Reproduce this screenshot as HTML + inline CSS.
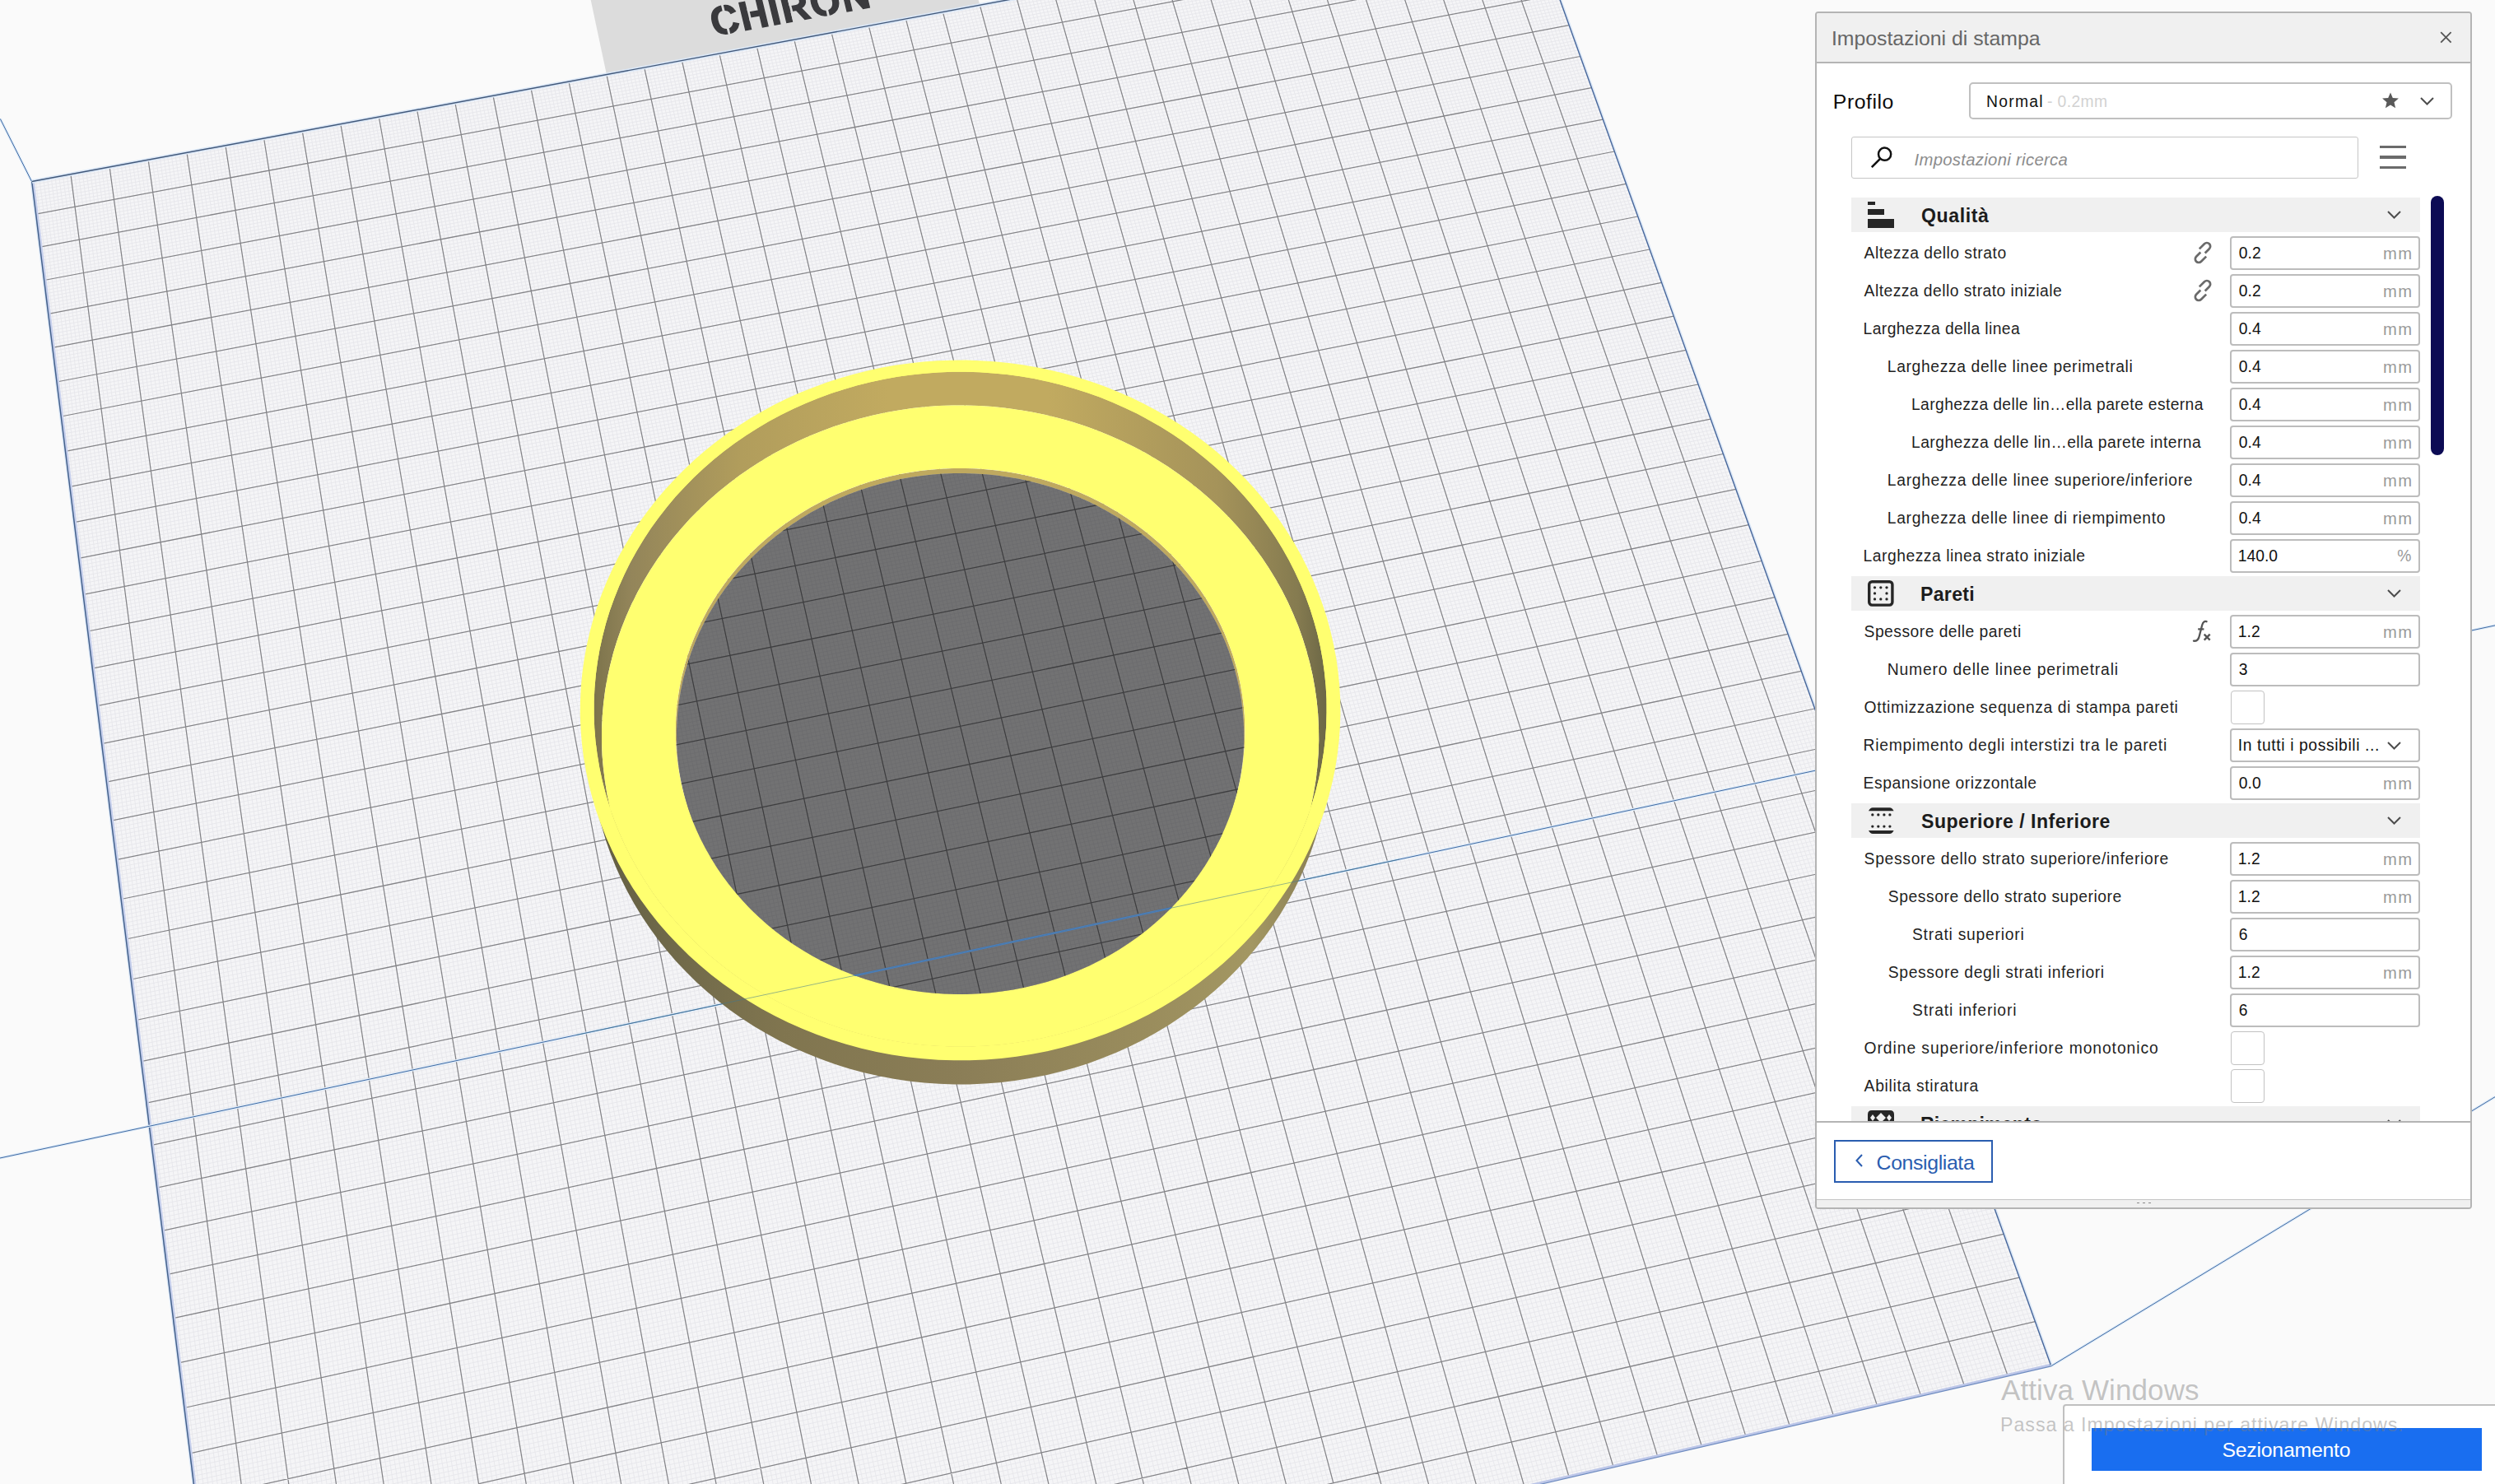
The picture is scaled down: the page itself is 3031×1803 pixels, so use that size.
<!DOCTYPE html>
<html lang="it"><head><meta charset="utf-8"><title>Cura</title>
<style>
html,body{margin:0;padding:0}
body{width:3031px;height:1803px;overflow:hidden;background:#fafafa;position:relative;font-family:"Liberation Sans",sans-serif}
.t{position:absolute;white-space:nowrap;line-height:30px;font-family:"Liberation Sans",sans-serif}
</style></head><body>
<svg width="3031" height="1803" viewBox="0 0 3031 1803" style="position:absolute;left:0;top:0">
<defs>
<clipPath id="cE2"><path d="M1596.1 754.5L1600.4 769.9L1603.9 785.6L1606.8 801.3L1609 817.2L1610.6 833.2L1611.5 849.2L1611.6 865.3L1611.2 881.5L1610 897.6L1608.1 913.7L1605.5 929.7L1602.2 945.7L1598.3 961.6L1593.6 977.3L1588.3 992.9L1582.3 1008.3L1575.6 1023.5L1568.2 1038.4L1560.2 1053.1L1551.5 1067.5L1542.2 1081.6L1532.3 1095.4L1521.7 1108.8L1510.6 1121.8L1498.9 1134.4L1486.6 1146.6L1473.8 1158.3L1460.5 1169.6L1446.6 1180.3L1432.3 1190.5L1417.5 1200.2L1402.3 1209.4L1386.7 1218L1370.7 1226L1354.3 1233.3L1337.6 1240.1L1320.6 1246.2L1303.4 1251.7L1285.9 1256.6L1268.2 1260.7L1250.3 1264.2L1232.2 1267L1214.1 1269.2L1195.9 1270.6L1177.6 1271.4L1159.3 1271.4L1141 1270.8L1122.7 1269.5L1104.6 1267.5L1086.5 1264.8L1068.6 1261.4L1050.8 1257.4L1033.3 1252.7L1016 1247.3L999 1241.3L982.2 1234.6L965.8 1227.3L949.7 1219.5L934 1211L918.7 1202L903.8 1192.4L889.4 1182.2L875.5 1171.6L862 1160.4L849.1 1148.8L836.7 1136.7L824.9 1124.1L813.6 1111.2L803 1097.9L792.9 1084.2L783.5 1070.1L774.7 1055.8L766.5 1041.1L759 1026.2L752.2 1011.1L746.1 995.7L740.6 980.2L735.8 964.5L731.7 948.6L728.3 932.7L725.6 916.6L723.5 900.6L722.2 884.4L721.6 868.3L721.6 852.2L722.4 836.1L723.8 820.1L725.9 804.2L728.6 788.4L732.1 772.8L736.1 757.3L740.8 742L746.2 726.9L752.2 712L758.7 697.4L765.9 683.1L773.7 669L782 655.2L790.8 641.8L800.3 628.7L810.2 616L820.6 603.6L831.6 591.7L843 580.1L854.8 569L867.1 558.3L879.8 548.1L892.9 538.3L906.4 529L920.2 520.2L934.4 511.8L948.9 504L963.7 496.7L978.8 490L994.1 483.7L1009.6 478L1025.4 472.9L1041.4 468.2L1057.5 464.2L1073.8 460.7L1090.2 457.8L1106.7 455.4L1123.2 453.7L1139.9 452.5L1156.6 451.8L1173.2 451.8L1189.9 452.3L1206.6 453.4L1223.2 455.1L1239.7 457.3L1256.1 460.1L1272.4 463.5L1288.6 467.5L1304.5 472L1320.4 477L1336 482.6L1351.3 488.8L1366.4 495.4L1381.3 502.6L1395.9 510.4L1410.1 518.6L1424 527.3L1437.6 536.5L1450.7 546.2L1463.5 556.4L1475.9 567L1487.8 578L1499.3 589.5L1510.4 601.4L1520.9 613.7L1530.9 626.3L1540.5 639.4L1549.5 652.7L1557.9 666.4L1565.8 680.4L1573 694.7L1579.7 709.3L1585.8 724.1L1591.3 739.2Z"/></clipPath>
<clipPath id="cE4"><path d="M1501.2 808L1504.4 820.1L1507 832.3L1509.1 844.6L1510.7 857.1L1511.8 869.5L1512.3 882.1L1512.3 894.6L1511.8 907.2L1510.7 919.7L1509.1 932.3L1507 944.7L1504.3 957.1L1501.1 969.4L1497.4 981.6L1493.1 993.7L1488.3 1005.6L1483 1017.4L1477.2 1028.9L1470.9 1040.3L1464.1 1051.4L1456.8 1062.3L1449 1072.9L1440.8 1083.2L1432.1 1093.2L1423 1102.9L1413.5 1112.3L1403.5 1121.3L1393.1 1129.9L1382.4 1138.2L1371.3 1146L1359.9 1153.5L1348.1 1160.5L1336 1167.1L1323.7 1173.2L1311.1 1178.8L1298.2 1184L1285.1 1188.7L1271.8 1192.9L1258.3 1196.6L1244.7 1199.8L1230.9 1202.4L1217.1 1204.6L1203.1 1206.2L1189.1 1207.3L1175 1207.9L1161 1208L1146.9 1207.5L1132.9 1206.5L1118.9 1204.9L1105 1202.9L1091.2 1200.3L1077.5 1197.2L1064 1193.6L1050.7 1189.5L1037.6 1184.9L1024.6 1179.8L1012 1174.2L999.6 1168.2L987.4 1161.7L975.6 1154.8L964.1 1147.4L952.9 1139.7L942.1 1131.5L931.7 1122.9L921.7 1114L912 1104.7L902.8 1095L894.1 1085.1L885.7 1074.8L877.9 1064.2L870.5 1053.4L863.6 1042.3L857.2 1031L851.2 1019.5L845.8 1007.8L840.9 995.9L836.6 983.9L832.7 971.7L829.4 959.4L826.6 947L824.4 934.5L822.7 922L821.5 909.5L820.9 896.9L820.8 884.4L821.2 871.8L822.2 859.3L823.7 846.9L825.7 834.6L828.2 822.3L831.3 810.2L834.8 798.2L838.8 786.3L843.4 774.6L848.4 763.2L853.9 751.9L859.8 740.8L866.2 730L873 719.4L880.3 709.1L888 699L896 689.3L904.5 679.8L913.3 670.7L922.5 661.9L932.1 653.4L942 645.3L952.2 637.6L962.7 630.2L973.5 623.2L984.6 616.6L995.9 610.4L1007.5 604.6L1019.3 599.2L1031.3 594.3L1043.4 589.7L1055.8 585.6L1068.3 582L1081 578.8L1093.7 576L1106.6 573.7L1119.5 571.8L1132.5 570.4L1145.6 569.4L1158.7 568.9L1171.8 568.9L1184.9 569.3L1198 570.2L1211 571.5L1223.9 573.3L1236.8 575.5L1249.6 578.2L1262.3 581.4L1274.8 584.9L1287.2 589L1299.4 593.4L1311.5 598.3L1323.3 603.6L1334.9 609.3L1346.3 615.4L1357.4 622L1368.3 628.9L1378.8 636.2L1389.1 643.9L1399.1 651.9L1408.7 660.3L1418 669.1L1426.9 678.1L1435.4 687.5L1443.6 697.2L1451.4 707.2L1458.7 717.5L1465.6 728L1472.1 738.8L1478.1 749.8L1483.7 761.1L1488.8 772.5L1493.4 784.2L1497.6 796Z"/></clipPath>
<linearGradient id="gIn" gradientUnits="userSpaceOnUse" x1="722" y1="0" x2="1612" y2="0"><stop offset="0" stop-color="#7d744c"/><stop offset="0.05" stop-color="#93855a"/><stop offset="0.2" stop-color="#b19d5c"/><stop offset="0.4" stop-color="#c1aa60"/><stop offset="0.62" stop-color="#c1aa60"/><stop offset="0.85" stop-color="#a5935a"/><stop offset="0.96" stop-color="#857b50"/><stop offset="1" stop-color="#6c6746"/></linearGradient>
<linearGradient id="gOut" gradientUnits="userSpaceOnUse" x1="705" y1="0" x2="1628" y2="0"><stop offset="0.000" stop-color="#5f5a40"/><stop offset="0.103" stop-color="#6e6849"/><stop offset="0.265" stop-color="#80754f"/><stop offset="0.504" stop-color="#8b7e57"/><stop offset="0.753" stop-color="#9a8d5d"/><stop offset="0.883" stop-color="#a39762"/><stop offset="0.959" stop-color="#8d8257"/><stop offset="1.000" stop-color="#6b6544"/></linearGradient>
</defs>
<path d="M736.9 90.6L716.1 -7.5L1186.3 -8.7L1190.3 6.2Z" fill="#dcdcdc"/>
<g transform="matrix(0.4627 -0.0856 0.1160 0.4796 867.6 43.7)"><text font-family="Liberation Sans, sans-serif" font-weight="bold" font-size="100" letter-spacing="4" fill="#3a3a3d" stroke="#3a3a3d" stroke-width="3" x="0" y="0">CHIRON</text>
<rect x="36" y="-85" width="6" height="100" fill="#dcdcdc"/><rect x="98.5" y="-50" width="5.5" height="30" fill="#dcdcdc"/><rect x="207" y="-80" width="5.5" height="90" fill="#dcdcdc"/><rect x="296.5" y="-85" width="6" height="100" fill="#dcdcdc"/><rect x="365.5" y="-80" width="5" height="22" fill="#dcdcdc"/></g>
<path d="M38.7 220.5L1853 -117.1L2491.8 1659.8L281.2 2171.3Z" fill="#f5f5f7"/>
<path d="M43.4 219.6L241.6 1807M39.2 224.4L1266.2 -4M48.1 218.7L247.4 1807M39.6 228.4L1287.3 -4M52.9 217.8L253.2 1807M40.1 232.3L1308.4 -4M57.6 217L259 1807M40.6 236.3L1329.5 -4M62.3 216.1L264.7 1807M41.1 240.2L1350.6 -4M67 215.2L270.5 1807M41.6 244.2L1371.7 -4M71.7 214.3L276.3 1807M42.1 248.2L1392.7 -4M76.5 213.4L282.1 1807M42.6 252.1L1413.8 -4M81.2 212.6L287.8 1807M43.1 256.1L1434.9 -4M90.6 210.8L299.4 1807M44.1 264.1L1477.1 -4M95.3 209.9L305.1 1807M44.6 268.1L1498.2 -4M100.1 209.1L310.9 1807M45.1 272L1519.3 -4M104.8 208.2L316.7 1807M45.6 276L1540.4 -4M109.5 207.3L322.5 1807M46.1 280L1561.5 -4M114.2 206.4L328.2 1807M46.6 284L1582.5 -4M118.9 205.5L334 1807M47.1 288L1603.6 -4M123.6 204.7L339.8 1807M47.6 292.1L1624.7 -4M128.3 203.8L345.5 1807M48.1 296.1L1645.8 -4M137.8 202L357.1 1807M49.1 304.1L1688 -4M142.5 201.2L362.9 1807M49.6 308.1L1709.1 -4M147.2 200.3L368.6 1807M50.1 312.2L1730.2 -4M151.9 199.4L374.4 1807M50.6 316.2L1751.3 -4M156.6 198.5L380.2 1807M51.1 320.2L1772.3 -4M161.3 197.7L385.9 1807M51.6 324.3L1793.4 -4M166 196.8L391.7 1807M52.1 328.3L1814.5 -4M170.7 195.9L397.5 1807M52.6 332.4L1835.6 -4M175.4 195L403.3 1807M53.1 336.4L1856.7 -4M184.8 193.3L414.8 1807M54.1 344.5L1894 -3.1M189.5 192.4L420.6 1807M54.6 348.6L1895.3 0.7M194.2 191.5L426.3 1807M55.1 352.7L1896.7 4.4M198.9 190.7L432.1 1807M55.6 356.7L1898 8.1M203.6 189.8L437.9 1807M56.1 360.8L1899.4 11.9M208.3 188.9L443.7 1807M56.6 364.9L1900.7 15.6M213 188L449.4 1807M57.1 369L1902.1 19.4M217.7 187.2L455.2 1807M57.6 373.1L1903.4 23.1M222.4 186.3L461 1807M58.1 377.2L1904.8 26.9M231.7 184.6L472.5 1807M59.2 385.4L1907.5 34.4M236.4 183.7L478.3 1807M59.7 389.5L1908.8 38.2M241.1 182.8L484.1 1807M60.2 393.6L1910.2 42M245.8 181.9L489.8 1807M60.7 397.7L1911.5 45.7M250.5 181.1L495.6 1807M61.2 401.8L1912.9 49.5M255.2 180.2L501.4 1807M61.7 405.9L1914.3 53.3M259.8 179.3L507.2 1807M62.2 410L1915.6 57.1M264.5 178.5L512.9 1807M62.7 414.2L1917 60.9M269.2 177.6L518.7 1807M63.3 418.3L1918.3 64.7M278.6 175.8L530.2 1807M64.3 426.6L1921.1 72.3M283.2 175L536 1807M64.8 430.7L1922.4 76.1M287.9 174.1L541.8 1807M65.3 434.9L1923.8 79.9M292.6 173.2L547.6 1807M65.8 439L1925.2 83.7M297.3 172.4L553.3 1807M66.3 443.2L1926.6 87.5M301.9 171.5L559.1 1807M66.9 447.3L1927.9 91.3M306.6 170.6L564.9 1807M67.4 451.5L1929.3 95.1M311.3 169.8L570.6 1807M67.9 455.7L1930.7 99M316 168.9L576.4 1807M68.4 459.8L1932 102.8M325.3 167.1L588 1807M69.5 468.2L1934.8 110.5M330 166.3L593.7 1807M70 472.4L1936.2 114.3M334.6 165.4L599.5 1807M70.5 476.6L1937.6 118.1M339.3 164.5L605.3 1807M71 480.8L1939 122M344 163.7L611 1807M71.5 485L1940.3 125.8M348.6 162.8L616.8 1807M72.1 489.2L1941.7 129.7M353.3 161.9L622.6 1807M72.6 493.4L1943.1 133.5M358 161.1L628.4 1807M73.1 497.6L1944.5 137.4M362.6 160.2L634.1 1807M73.6 501.8L1945.9 141.3M371.9 158.5L645.7 1807M74.7 510.2L1948.7 149M376.6 157.6L651.5 1807M75.2 514.5L1950.1 152.9M381.2 156.7L657.2 1807M75.7 518.7L1951.5 156.8M385.9 155.9L663 1807M76.3 522.9L1952.9 160.7M390.6 155L668.8 1807M76.8 527.2L1954.3 164.5M395.2 154.1L674.5 1807M77.3 531.4L1955.7 168.4M399.9 153.3L680.3 1807M77.8 535.7L1957.1 172.3M404.5 152.4L686.1 1807M78.4 539.9L1958.5 176.2M409.2 151.5L691.9 1807M78.9 544.2L1959.9 180.1M418.5 149.8L703.4 1807M80 552.7L1962.7 187.9M423.1 148.9L709.2 1807M80.5 557L1964.1 191.9M427.8 148.1L714.9 1807M81 561.2L1965.5 195.8M432.4 147.2L720.7 1807M81.6 565.5L1966.9 199.7M437.1 146.3L726.5 1807M82.1 569.8L1968.3 203.6M441.7 145.5L732.3 1807M82.6 574.1L1969.7 207.6M446.3 144.6L738 1807M83.2 578.4L1971.1 211.5M451 143.8L743.8 1807M83.7 582.7L1972.5 215.4M455.6 142.9L749.6 1807M84.2 587L1974 219.4M464.9 141.2L761.1 1807M85.3 595.6L1976.8 227.3M469.5 140.3L766.9 1807M85.8 599.9L1978.2 231.2M474.2 139.4L772.7 1807M86.4 604.2L1979.6 235.2M478.8 138.6L778.4 1807M86.9 608.5L1981.1 239.1M483.5 137.7L784.2 1807M87.4 612.9L1982.5 243.1M488.1 136.9L790 1807M88 617.2L1983.9 247M492.7 136L795.7 1807M88.5 621.5L1985.3 251M497.4 135.1L801.5 1807M89.1 625.9L1986.8 255M502 134.3L807.3 1807M89.6 630.2L1988.2 259M511.3 132.5L818.8 1807M90.7 638.9L1991.1 266.9M515.9 131.7L824.6 1807M91.2 643.3L1992.5 270.9M520.5 130.8L830.4 1807M91.8 647.6L1993.9 274.9M525.1 130L836.2 1807M92.3 652L1995.4 278.9M529.8 129.1L841.9 1807M92.8 656.4L1996.8 282.9M534.4 128.2L847.7 1807M93.4 660.7L1998.2 286.9M539 127.4L853.5 1807M93.9 665.1L1999.7 290.9M543.6 126.5L859.2 1807M94.5 669.5L2001.1 294.9M548.3 125.7L865 1807M95 673.9L2002.6 299M557.5 123.9L876.6 1807M96.1 682.7L2005.5 307M562.1 123.1L882.3 1807M96.7 687.1L2006.9 311M566.7 122.2L888.1 1807M97.2 691.5L2008.4 315.1M571.3 121.4L893.9 1807M97.8 695.9L2009.8 319.1M576 120.5L899.6 1807M98.3 700.3L2011.3 323.1M580.6 119.6L905.4 1807M98.9 704.7L2012.7 327.2M585.2 118.8L911.2 1807M99.4 709.1L2014.2 331.2M589.8 117.9L917 1807M100 713.6L2015.6 335.3M594.4 117.1L922.7 1807M100.5 718L2017.1 339.3M603.6 115.4L934.3 1807M101.6 726.9L2020 347.5M608.2 114.5L940 1807M102.2 731.3L2021.5 351.5M612.9 113.6L945.8 1807M102.7 735.8L2022.9 355.6M617.5 112.8L951.6 1807M103.3 740.2L2024.4 359.7M622.1 111.9L957.4 1807M103.8 744.7L2025.9 363.8M626.7 111.1L963.1 1807M104.4 749.1L2027.3 367.8M631.3 110.2L968.9 1807M104.9 753.6L2028.8 371.9M635.9 109.4L974.7 1807M105.5 758.1L2030.3 376M640.5 108.5L980.5 1807M106 762.6L2031.8 380.1M649.7 106.8L992 1807M107.2 771.5L2034.7 388.3M654.3 105.9L997.8 1807M107.7 776L2036.2 392.4M658.9 105.1L1003.5 1807M108.3 780.5L2037.7 396.5M663.5 104.2L1009.3 1807M108.8 785L2039.1 400.6M668.1 103.4L1015.1 1807M109.4 789.5L2040.6 404.8M672.7 102.5L1020.9 1807M110 794L2042.1 408.9M677.3 101.7L1026.6 1807M110.5 798.5L2043.6 413M681.9 100.8L1032.4 1807M111.1 803L2045.1 417.1M686.5 99.9L1038.2 1807M111.6 807.6L2046.6 421.3M695.6 98.2L1049.7 1807M112.8 816.6L2049.5 429.6M700.2 97.4L1055.5 1807M113.3 821.2L2051 433.7M704.8 96.5L1061.3 1807M113.9 825.7L2052.5 437.9M709.4 95.7L1067 1807M114.5 830.3L2054 442M714 94.8L1072.8 1807M115 834.8L2055.5 446.2M718.6 94L1078.6 1807M115.6 839.4L2057 450.3M723.2 93.1L1084.4 1807M116.2 843.9L2058.5 454.5M727.7 92.3L1090.1 1807M116.7 848.5L2060 458.7M732.3 91.4L1095.9 1807M117.3 853.1L2061.5 462.9M741.5 89.7L1107.4 1807M118.4 862.2L2064.5 471.2M746.1 88.9L1113.2 1807M119 866.8L2066 475.4M750.7 88L1119 1807M119.6 871.4L2067.5 479.6M755.2 87.2L1124.8 1807M120.1 876L2069 483.8M759.8 86.3L1130.5 1807M120.7 880.6L2070.5 488M764.4 85.4L1136.3 1807M121.3 885.2L2072.1 492.2M769 84.6L1142.1 1807M121.9 889.8L2073.6 496.4M773.5 83.7L1147.8 1807M122.4 894.4L2075.1 500.6M778.1 82.9L1153.6 1807M123 899L2076.6 504.9M787.2 81.2L1165.2 1807M124.2 908.3L2079.6 513.3M791.8 80.3L1170.9 1807M124.7 912.9L2081.2 517.5M796.4 79.5L1176.7 1807M125.3 917.5L2082.7 521.8M801 78.6L1182.5 1807M125.9 922.2L2084.2 526M805.5 77.8L1188.2 1807M126.5 926.8L2085.7 530.2M810.1 76.9L1194 1807M127 931.5L2087.3 534.5M814.7 76.1L1199.8 1807M127.6 936.1L2088.8 538.7M819.2 75.2L1205.6 1807M128.2 940.8L2090.3 543M823.8 74.4L1211.3 1807M128.8 945.4L2091.8 547.3M832.9 72.7L1222.9 1807M129.9 954.8L2094.9 555.8M837.5 71.8L1228.7 1807M130.5 959.5L2096.5 560.1M842 71L1234.4 1807M131.1 964.2L2098 564.3M846.6 70.2L1240.2 1807M131.7 968.8L2099.5 568.6M851.2 69.3L1246 1807M132.3 973.5L2101.1 572.9M855.7 68.5L1251.7 1807M132.9 978.2L2102.6 577.2M860.3 67.6L1257.5 1807M133.4 982.9L2104.2 581.5M864.8 66.8L1263.3 1807M134 987.7L2105.7 585.8M869.4 65.9L1269.1 1807M134.6 992.4L2107.2 590.1M878.5 64.2L1280.6 1807M135.8 1001.8L2110.3 598.7M883 63.4L1286.4 1807M136.4 1006.5L2111.9 603M887.6 62.5L1292.1 1807M137 1011.3L2113.5 607.4M892.1 61.7L1297.9 1807M137.6 1016L2115 611.7M896.7 60.8L1303.7 1807M138.1 1020.8L2116.6 616M901.2 60L1309.5 1807M138.7 1025.5L2118.1 620.3M905.8 59.1L1315.2 1807M139.3 1030.3L2119.7 624.7M910.3 58.3L1321 1807M139.9 1035L2121.2 629M914.9 57.4L1326.8 1807M140.5 1039.8L2122.8 633.4M923.9 55.8L1338.3 1807M141.7 1049.3L2125.9 642.1M928.5 54.9L1344.1 1807M142.3 1054.1L2127.5 646.4M933 54.1L1349.9 1807M142.9 1058.9L2129.1 650.8M937.6 53.2L1355.6 1807M143.5 1063.7L2130.6 655.2M942.1 52.4L1361.4 1807M144.1 1068.5L2132.2 659.5M946.7 51.5L1367.2 1807M144.7 1073.3L2133.8 663.9M951.2 50.7L1373 1807M145.3 1078.1L2135.4 668.3M955.7 49.8L1378.7 1807M145.9 1082.9L2136.9 672.7M960.3 49L1384.5 1807M146.5 1087.7L2138.5 677.1M969.3 47.3L1396 1807M147.7 1097.3L2141.7 685.9M973.9 46.5L1401.8 1807M148.3 1102.2L2143.3 690.3M978.4 45.6L1407.6 1807M148.9 1107L2144.8 694.7M982.9 44.8L1413.4 1807M149.5 1111.9L2146.4 699.1M987.5 43.9L1419.1 1807M150.1 1116.7L2148 703.5M992 43.1L1424.9 1807M150.7 1121.5L2149.6 707.9M996.5 42.3L1430.7 1807M151.3 1126.4L2151.2 712.3M1001 41.4L1436.5 1807M151.9 1131.3L2152.8 716.8M1005.6 40.6L1442.2 1807M152.5 1136.1L2154.4 721.2M1014.6 38.9L1453.8 1807M153.7 1145.9L2157.6 730.1M1019.1 38L1459.5 1807M154.3 1150.8L2159.2 734.5M1023.7 37.2L1465.3 1807M154.9 1155.6L2160.8 739M1028.2 36.4L1471.1 1807M155.5 1160.5L2162.4 743.5M1032.7 35.5L1476.9 1807M156.1 1165.4L2164 747.9M1037.2 34.7L1482.6 1807M156.7 1170.3L2165.6 752.4M1041.7 33.8L1488.4 1807M157.3 1175.2L2167.2 756.9M1046.2 33L1494.2 1807M158 1180.2L2168.8 761.3M1050.8 32.2L1499.9 1807M158.6 1185.1L2170.4 765.8M1059.8 30.5L1511.5 1807M159.8 1194.9L2173.6 774.8M1064.3 29.6L1517.3 1807M160.4 1199.9L2175.3 779.3M1068.8 28.8L1523 1807M161 1204.8L2176.9 783.8M1073.3 28L1528.8 1807M161.6 1209.7L2178.5 788.3M1077.8 27.1L1534.6 1807M162.3 1214.7L2180.1 792.8M1082.4 26.3L1540.4 1807M162.9 1219.7L2181.7 797.3M1086.9 25.4L1546.1 1807M163.5 1224.6L2183.4 801.8M1091.4 24.6L1551.9 1807M164.1 1229.6L2185 806.3M1095.9 23.8L1557.7 1807M164.7 1234.6L2186.6 810.9M1104.9 22.1L1569.2 1807M166 1244.5L2189.9 819.9M1109.4 21.3L1575 1807M166.6 1249.5L2191.5 824.5M1113.9 20.4L1580.8 1807M167.2 1254.5L2193.1 829M1118.4 19.6L1586.5 1807M167.8 1259.5L2194.8 833.6M1122.9 18.7L1592.3 1807M168.4 1264.5L2196.4 838.1M1127.4 17.9L1598.1 1807M169.1 1269.5L2198.1 842.7M1131.9 17.1L1603.8 1807M169.7 1274.5L2199.7 847.2M1136.4 16.2L1609.6 1807M170.3 1279.5L2201.3 851.8M1140.9 15.4L1615.4 1807M170.9 1284.6L2203 856.4M1149.9 13.7L1626.9 1807M172.2 1294.6L2206.3 865.5M1154.4 12.9L1632.7 1807M172.8 1299.7L2207.9 870.1M1158.9 12L1638.5 1807M173.4 1304.7L2209.6 874.7M1163.4 11.2L1644.3 1807M174.1 1309.8L2211.2 879.3M1167.9 10.4L1650 1807M174.7 1314.8L2212.9 883.9M1172.4 9.5L1655.8 1807M175.3 1319.9L2214.5 888.5M1176.8 8.7L1661.6 1807M176 1325L2216.2 893.1M1181.3 7.9L1667.3 1807M176.6 1330L2217.9 897.8M1185.8 7L1673.1 1807M177.2 1335.1L2219.5 902.4M1194.8 5.4L1684.7 1807M178.5 1345.3L2222.9 911.6M1199.3 4.5L1690.4 1807M179.1 1350.4L2224.5 916.3M1203.8 3.7L1696.2 1807M179.8 1355.5L2226.2 920.9M1208.2 2.9L1702 1807M180.4 1360.6L2227.9 925.6M1212.7 2L1707.7 1807M181 1365.7L2229.5 930.2M1217.2 1.2L1713.5 1807M181.7 1370.8L2231.2 934.9M1221.7 0.4L1719.3 1807M182.3 1376L2232.9 939.5M1226.2 -0.5L1725.1 1807M182.9 1381.1L2234.6 944.2M1230.6 -1.3L1730.8 1807M183.6 1386.2L2236.2 948.9M1239.6 -3L1742.4 1807M184.9 1396.5L2239.6 958.2M1244.1 -3.8L1748.2 1807M185.5 1401.7L2241.3 962.9M1248.7 -4L1753.9 1807M186.1 1406.8L2243 967.6M1253.4 -4L1759.7 1807M186.8 1412L2244.7 972.3M1258.1 -4L1765.5 1807M187.4 1417.2L2246.3 977M1262.9 -4L1771.2 1807M188.1 1422.3L2248 981.7M1267.6 -4L1777 1807M188.7 1427.5L2249.7 986.4M1272.3 -4L1782.8 1807M189.3 1432.7L2251.4 991.1M1277 -4L1788.6 1807M190 1437.9L2253.1 995.8M1286.4 -4L1800.1 1807M191.3 1448.3L2256.5 1005.3M1291.1 -4L1805.9 1807M191.9 1453.5L2258.2 1010M1295.8 -4L1811.7 1807M192.6 1458.7L2259.9 1014.7M1300.5 -4L1817.4 1807M193.2 1463.9L2261.6 1019.5M1305.2 -4L1823.2 1807M193.9 1469.2L2263.3 1024.2M1309.9 -4L1829 1807M194.5 1474.4L2265 1029M1314.6 -4L1834.7 1807M195.2 1479.6L2266.8 1033.7M1319.3 -4L1840.5 1807M195.8 1484.9L2268.5 1038.5M1324.1 -4L1846.3 1807M196.5 1490.1L2270.2 1043.3M1333.5 -4L1857.7 1806.5M197.8 1500.6L2273.6 1052.8M1338.2 -4L1863.1 1805.3M198.5 1505.9L2275.3 1057.6M1342.9 -4L1868.5 1804M199.1 1511.2L2277.1 1062.4M1347.6 -4L1873.9 1802.8M199.8 1516.5L2278.8 1067.2M1352.3 -4L1879.3 1801.5M200.4 1521.7L2280.5 1072M1357 -4L1884.7 1800.3M201.1 1527L2282.2 1076.8M1361.7 -4L1890.1 1799M201.7 1532.3L2284 1081.6M1366.4 -4L1895.5 1797.8M202.4 1537.6L2285.7 1086.4M1371.1 -4L1900.9 1796.5M203.1 1542.9L2287.4 1091.2M1380.5 -4L1911.7 1794M204.4 1553.6L2290.9 1100.9M1385.2 -4L1917.1 1792.8M205 1558.9L2292.6 1105.7M1390 -4L1922.5 1791.6M205.7 1564.2L2294.4 1110.6M1394.7 -4L1927.9 1790.3M206.4 1569.6L2296.1 1115.4M1399.4 -4L1933.3 1789.1M207 1574.9L2297.9 1120.3M1404.1 -4L1938.7 1787.8M207.7 1580.3L2299.6 1125.1M1408.8 -4L1944.1 1786.6M208.4 1585.6L2301.3 1130M1413.5 -4L1949.5 1785.3M209 1591L2303.1 1134.8M1418.2 -4L1954.9 1784.1M209.7 1596.4L2304.8 1139.7M1427.6 -4L1965.6 1781.6M211 1607.1L2308.4 1149.5M1432.3 -4L1971 1780.3M211.7 1612.5L2310.1 1154.3M1437 -4L1976.4 1779.1M212.4 1617.9L2311.9 1159.2M1441.7 -4L1981.8 1777.8M213 1623.3L2313.6 1164.1M1446.4 -4L1987.1 1776.6M213.7 1628.7L2315.4 1169M1451.2 -4L1992.5 1775.4M214.4 1634.1L2317.2 1173.9M1455.9 -4L1997.9 1774.1M215.1 1639.5L2318.9 1178.9M1460.6 -4L2003.3 1772.9M215.7 1644.9L2320.7 1183.8M1465.3 -4L2008.6 1771.6M216.4 1650.4L2322.5 1188.7M1474.7 -4L2019.4 1769.1M217.8 1661.2L2326 1198.6M1479.4 -4L2024.7 1767.9M218.4 1666.7L2327.8 1203.5M1484.1 -4L2030.1 1766.7M219.1 1672.1L2329.6 1208.4M1488.8 -4L2035.5 1765.4M219.8 1677.6L2331.3 1213.4M1493.5 -4L2040.8 1764.2M220.5 1683.1L2333.1 1218.3M1498.2 -4L2046.2 1762.9M221.2 1688.5L2334.9 1223.3M1502.9 -4L2051.6 1761.7M221.8 1694L2336.7 1228.3M1507.6 -4L2056.9 1760.5M222.5 1699.5L2338.5 1233.2M1512.3 -4L2062.3 1759.2M223.2 1705L2340.3 1238.2M1521.8 -4L2073 1756.7M224.6 1716L2343.8 1248.2M1526.5 -4L2078.3 1755.5M225.2 1721.5L2345.6 1253.2M1531.2 -4L2083.7 1754.3M225.9 1727L2347.4 1258.2M1535.9 -4L2089 1753M226.6 1732.5L2349.2 1263.2M1540.6 -4L2094.4 1751.8M227.3 1738.1L2351 1268.2M1545.3 -4L2099.7 1750.5M228 1743.6L2352.8 1273.2M1550 -4L2105.1 1749.3M228.7 1749.1L2354.6 1278.2M1554.7 -4L2110.4 1748.1M229.4 1754.7L2356.4 1283.2M1559.4 -4L2115.8 1746.8M230.1 1760.2L2358.3 1288.3M1568.8 -4L2126.5 1744.4M231.4 1771.4L2361.9 1298.3M1573.5 -4L2131.8 1743.1M232.1 1776.9L2363.7 1303.4M1578.3 -4L2137.2 1741.9M232.8 1782.5L2365.5 1308.4M1583 -4L2142.5 1740.7M233.5 1788.1L2367.3 1313.5M1587.7 -4L2147.8 1739.4M234.2 1793.7L2369.1 1318.6M1592.4 -4L2153.2 1738.2M234.9 1799.3L2371 1323.6M1597.1 -4L2158.5 1737M235.6 1804.9L2372.8 1328.7M1601.8 -4L2163.8 1735.7M252 1807L2374.6 1333.8M1606.5 -4L2169.2 1734.5M277.9 1807L2376.4 1338.9M1615.9 -4L2179.8 1732M329.6 1807L2380.1 1349M1620.6 -4L2185.1 1730.8M355.5 1807L2381.9 1354.1M1625.3 -4L2190.5 1729.6M381.3 1807L2383.8 1359.2M1630 -4L2195.8 1728.3M407.2 1807L2385.6 1364.4M1634.7 -4L2201.1 1727.1M433.1 1807L2387.5 1369.5M1639.4 -4L2206.4 1725.9M458.9 1807L2389.3 1374.6M1644.2 -4L2211.8 1724.6M484.8 1807L2391.1 1379.7M1648.9 -4L2217.1 1723.4M510.6 1807L2393 1384.9M1653.6 -4L2222.4 1722.2M536.5 1807L2394.8 1390M1663 -4L2233 1719.7M588.2 1807L2398.5 1400.3M1667.7 -4L2238.3 1718.5M614.1 1807L2400.4 1405.5M1672.4 -4L2243.7 1717.3M640 1807L2402.2 1410.6M1677.1 -4L2249 1716M665.8 1807L2404.1 1415.8M1681.8 -4L2254.3 1714.8M691.7 1807L2406 1421M1686.5 -4L2259.6 1713.6M717.6 1807L2407.8 1426.1M1691.2 -4L2264.9 1712.3M743.4 1807L2409.7 1431.3M1695.9 -4L2270.2 1711.1M769.3 1807L2411.6 1436.5M1700.6 -4L2275.5 1709.9M795.2 1807L2413.4 1441.7M1710.1 -4L2286.1 1707.4M846.9 1807L2417.2 1452.1M1714.8 -4L2291.4 1706.2M872.8 1807L2419 1457.3M1719.5 -4L2296.7 1705M898.6 1807L2420.9 1462.6M1724.2 -4L2302 1703.8M924.5 1807L2422.8 1467.8M1728.9 -4L2307.3 1702.5M950.4 1807L2424.7 1473M1733.6 -4L2312.6 1701.3M976.2 1807L2426.6 1478.3M1738.3 -4L2317.9 1700.1M1002.1 1807L2428.5 1483.5M1743 -4L2323.2 1698.9M1028 1807L2430.3 1488.8M1747.7 -4L2328.5 1697.6M1053.8 1807L2432.2 1494M1757.1 -4L2339.1 1695.2M1105.6 1807L2436 1504.5M1761.8 -4L2344.3 1694M1131.4 1807L2437.9 1509.8M1766.6 -4L2349.6 1692.7M1157.3 1807L2439.8 1515.1M1771.3 -4L2354.9 1691.5M1183.2 1807L2441.7 1520.4M1776 -4L2360.2 1690.3M1209 1807L2443.6 1525.7M1780.7 -4L2365.5 1689.1M1234.9 1807L2445.5 1531M1785.4 -4L2370.8 1687.8M1260.8 1807L2447.4 1536.3M1790.1 -4L2376 1686.6M1286.7 1807L2449.3 1541.6M1794.8 -4L2381.3 1685.4M1312.5 1807L2451.2 1546.9M1804.2 -4L2391.9 1683M1364.3 1807L2455.1 1557.5M1808.9 -4L2397.1 1681.7M1390.1 1807L2457 1562.8M1813.6 -4L2402.4 1680.5M1416 1807L2458.9 1568.2M1818.3 -4L2407.7 1679.3M1441.9 1807L2460.8 1573.5M1823 -4L2413 1678.1M1467.7 1807L2462.7 1578.9M1827.8 -4L2418.2 1676.9M1493.6 1807L2464.7 1584.2M1832.5 -4L2423.5 1675.6M1519.5 1807L2466.6 1589.6M1837.2 -4L2428.8 1674.4M1545.3 1807L2468.5 1595M1841.9 -4L2434 1673.2M1571.2 1807L2470.5 1600.3M1851.3 -4L2444.5 1670.8M1622.9 1807L2474.3 1611.1M1856 -4L2449.8 1669.6M1648.8 1807L2476.3 1616.5M1860.7 -4L2455.1 1668.3M1674.7 1807L2478.2 1621.9M1865.4 -4L2460.3 1667.1M1700.5 1807L2480.1 1627.3M1870.1 -4L2465.6 1665.9M1726.4 1807L2482.1 1632.7M1874.8 -4L2470.8 1664.7M1752.3 1807L2484 1638.1M1879.5 -4L2476.1 1663.5M1778.1 1807L2486 1643.5M1884.2 -4L2481.3 1662.3M1804 1807L2487.9 1649M1888.9 -4L2486.6 1661M1829.9 1807L2489.9 1654.4" stroke="#e7e7eb" stroke-width="0.9" fill="none"/>
<path d="M85.9 211.7L293.6 1807M43.6 260.1L1456 -4M133.1 202.9L351.3 1807M48.6 300.1L1666.9 -4M180.1 194.2L409 1807M53.6 340.5L1877.8 -4M227 185.4L466.7 1807M58.7 381.3L1906.1 30.6M273.9 176.7L524.5 1807M63.8 422.4L1919.7 68.5M320.6 168L582.2 1807M68.9 464L1933.4 106.6M367.3 159.3L639.9 1807M74.2 506L1947.3 145.1M413.8 150.7L697.6 1807M79.4 548.4L1961.3 184M460.3 142L755.3 1807M84.8 591.3L1975.4 223.3M506.6 133.4L813.1 1807M90.1 634.6L1989.6 263M552.9 124.8L870.8 1807M95.6 678.3L2004 303M599 116.2L928.5 1807M101.1 722.4L2018.6 343.4M645.1 107.6L986.2 1807M106.6 767L2033.2 384.2M691 99.1L1043.9 1807M112.2 812.1L2048 425.4M736.9 90.6L1101.7 1807M117.9 857.6L2063 467M782.7 82L1159.4 1807M123.6 903.6L2078.1 509.1M828.4 73.5L1217.1 1807M129.4 950.1L2093.4 551.5M873.9 65.1L1274.8 1807M135.2 997.1L2108.8 594.4M919.4 56.6L1332.6 1807M141.1 1044.6L2124.4 637.7M964.8 48.2L1390.3 1807M147.1 1092.5L2140.1 681.5M1010.1 39.7L1448 1807M153.1 1141L2156 725.7M1055.3 31.3L1505.7 1807M159.2 1190L2172 770.3M1100.4 22.9L1563.4 1807M165.3 1239.5L2188.3 815.4M1145.4 14.6L1621.2 1807M171.6 1289.6L2204.6 861M1190.3 6.2L1678.9 1807M177.9 1340.2L2221.2 907M1235.1 -2.1L1736.6 1807M184.2 1391.4L2237.9 953.5M1281.7 -4L1794.3 1807M190.6 1443.1L2254.8 1000.5M1328.8 -4L1852.1 1807M197.1 1495.4L2271.9 1048M1375.8 -4L1906.3 1795.3M203.7 1548.3L2289.2 1096.1M1422.9 -4L1960.2 1782.8M210.4 1601.7L2306.6 1144.6M1470 -4L2014 1770.4M217.1 1655.8L2324.2 1193.6M1517.1 -4L2067.6 1758M223.9 1710.5L2342.1 1243.2M1564.1 -4L2121.1 1745.6M230.8 1765.8L2360.1 1293.3M1611.2 -4L2174.5 1733.3M303.7 1807L2378.3 1343.9M1658.3 -4L2227.7 1720.9M562.4 1807L2396.7 1395.2M1705.4 -4L2280.8 1708.7M821 1807L2415.3 1446.9M1752.4 -4L2333.8 1696.4M1079.7 1807L2434.1 1499.3M1799.5 -4L2386.6 1684.2M1338.4 1807L2453.1 1552.2M1846.6 -4L2439.3 1672M1597.1 1807L2472.4 1605.7" stroke="#848488" stroke-width="1.25" fill="none"/>
<path d="M1848.6 1807L2491.5 1658.3" stroke="#bcc6e8" stroke-width="3.2" fill="none" />
<path d="M1855.7 1807L2491.8 1659.8" stroke="#6f8cc0" stroke-width="1.2" fill="none" />
<path d="M40.2 220.3L237.4 1807" stroke="#c6cfec" stroke-width="3.0" fill="none" />
<path d="M37.7 220.6L234.9 1807" stroke="#dbe7f6" stroke-width="2" fill="none" />
<path d="M38.7 220.5L235.9 1807" stroke="#44618c" stroke-width="1.5" fill="none" />
<path d="M38.7 220.5L1245.1 -4" stroke="#dbe7f6" stroke-width="4.5" fill="none" />
<path d="M38.7 220.5L1245.1 -4" stroke="#41587a" stroke-width="1.4" fill="none" />
<path d="M1894.7 -4L2492.8 1659.5" stroke="#dbe7f6" stroke-width="2.5" fill="none" />
<path d="M1893.7 -4L2491.8 1659.8" stroke="#47669a" stroke-width="1.4" fill="none" />
<path d="M38.3 220L0.3 144.4" stroke="#deebf8" stroke-width="3.2" fill="none" />
<path d="M38.3 220L0.3 144.4" stroke="#3f69a2" stroke-width="1.0" fill="none" />
<path d="M2491.6 1659.8L3031 1332.7" stroke="#deebf8" stroke-width="3.2" fill="none" />
<path d="M2491.6 1659.8L3031 1332.7" stroke="#3f69a2" stroke-width="1.0" fill="none" />
<path d="M0 1407L3031 759.9" stroke="#deebf8" stroke-width="3.2" fill="none" />
<path d="M0 1407L3031 759.9" stroke="#3f69a2" stroke-width="1.0" fill="none" />
<path d="M709.9 919.3L707.8 902.6L706.5 885.9L705.8 869.2L705.9 852.5L706.7 835.9L708.2 819.3L710.4 802.9L713.3 786.5L716.9 770.3L721.1 754.3L726 738.5L731.6 722.9L737.8 707.5L744.6 692.4L752 677.5L760.1 663L768.7 648.8L777.9 634.9L787.7 621.3L798 608.2L808.8 595.4L820.1 583.1L831.9 571.1L844.2 559.6L856.9 548.6L870 538L883.6 527.9L897.6 518.3L911.9 509.2L926.5 500.6L941.5 492.5L956.8 485L972.4 478L988.3 471.6L1004.3 465.7L1020.6 460.4L1037.1 455.6L1053.8 451.4L1070.6 447.8L1087.6 444.8L1104.6 442.4L1121.8 440.6L1139 439.3L1156.2 438.7L1173.5 438.6L1190.7 439.2L1207.9 440.3L1225.1 442L1242.1 444.3L1259.1 447.2L1276 450.7L1292.7 454.8L1309.2 459.4L1325.5 464.7L1341.7 470.4L1357.6 476.8L1373.2 483.7L1388.6 491.1L1403.6 499.1L1418.4 507.6L1432.8 516.6L1446.8 526.1L1460.4 536.1L1473.7 546.6L1486.5 557.6L1498.8 569L1510.7 580.8L1522.2 593.1L1533.1 605.8L1543.5 618.9L1553.4 632.4L1562.7 646.2L1571.4 660.3L1579.6 674.8L1587.1 689.6L1594.1 704.7L1600.4 720L1606.1 735.6L1611.2 751.4L1615.5 767.4L1619.2 783.6L1622.3 799.9L1624.6 816.3L1626.2 832.9L1627.2 849.5L1627.4 866.2L1626.9 882.9L1625.7 899.6L1623.8 916.2L1621.2 932.9L1617.8 949.4L1613.7 965.8L1608.9 982.1L1597.9 1018.9L1592.6 1034.7L1586.5 1050.3L1579.7 1065.7L1572.3 1080.9L1564.2 1095.8L1555.5 1110.4L1546.1 1124.7L1536 1138.7L1525.4 1152.3L1514.2 1165.5L1502.3 1178.3L1489.9 1190.7L1477 1202.6L1463.5 1214L1449.5 1224.9L1435 1235.3L1420.1 1245.2L1404.7 1254.4L1389 1263.2L1372.8 1271.3L1356.3 1278.8L1339.4 1285.6L1322.2 1291.9L1304.8 1297.4L1287.1 1302.3L1269.2 1306.6L1251.1 1310.1L1232.9 1313L1214.6 1315.2L1196.2 1316.6L1177.7 1317.4L1159.2 1317.5L1140.7 1316.8L1122.3 1315.5L1103.9 1313.4L1085.7 1310.7L1067.6 1307.3L1049.6 1303.2L1031.9 1298.4L1014.4 1292.9L997.2 1286.8L980.3 1280.1L963.7 1272.7L947.4 1264.7L931.6 1256.1L916.1 1246.9L901.1 1237.2L886.5 1226.9L872.4 1216L858.9 1204.7L845.8 1192.9L833.3 1180.6L821.3 1167.9L810 1154.7L799.2 1141.2L789.1 1127.3L779.5 1113.1L770.7 1098.5L762.4 1083.6L754.9 1068.5L748 1053.1L741.8 1037.5L736.2 1021.8L731.4 1005.8L720.4 968.8L716.2 952.4L712.7 935.9ZM1611.2 751.4L1615.5 767.4L1619.2 783.6L1622.3 799.9L1624.6 816.3L1626.2 832.9L1627.2 849.5L1627.4 866.2L1626.9 882.9L1625.7 899.6L1623.8 916.2L1621.2 932.9L1617.8 949.4L1613.7 965.8L1608.9 982.1L1603.4 998.3L1597.2 1014.2L1590.3 1030L1582.7 1045.5L1574.4 1060.7L1565.5 1075.7L1555.8 1090.3L1545.6 1104.6L1534.7 1118.5L1523.1 1132L1511 1145.1L1498.3 1157.7L1485 1169.9L1471.2 1181.5L1456.9 1192.7L1442 1203.3L1426.7 1213.4L1411 1222.9L1394.8 1231.8L1378.2 1240.1L1361.2 1247.8L1343.9 1254.8L1326.3 1261.1L1308.4 1266.8L1290.3 1271.9L1271.9 1276.2L1253.4 1279.8L1234.7 1282.8L1215.9 1285L1196.9 1286.5L1178 1287.3L1159 1287.3L1140 1286.7L1121.1 1285.3L1102.3 1283.2L1083.5 1280.4L1065 1276.9L1046.6 1272.7L1028.4 1267.8L1010.4 1262.2L992.8 1256L975.4 1249.1L958.4 1241.5L941.7 1233.4L925.4 1224.6L909.6 1215.2L894.2 1205.2L879.2 1194.7L864.8 1183.6L850.9 1172L837.5 1160L824.7 1147.4L812.4 1134.4L800.8 1121L789.8 1107.1L779.4 1092.9L769.6 1078.4L760.5 1063.5L752.1 1048.3L744.4 1032.8L737.3 1017.1L731 1001.2L725.3 985.1L720.4 968.8L716.2 952.4L712.7 935.9L709.9 919.3L707.8 902.6L706.5 885.9L705.8 869.2L705.9 852.5L706.7 835.9L708.2 819.3L710.4 802.9L713.3 786.5L716.9 770.3L721.1 754.3L726 738.5L731.6 722.9L737.8 707.5L744.6 692.4L752 677.5L760.1 663L768.7 648.8L777.9 634.9L787.7 621.3L798 608.2L808.8 595.4L820.1 583.1L831.9 571.1L844.2 559.6L856.9 548.6L870 538L883.6 527.9L897.6 518.3L911.9 509.2L926.5 500.6L941.5 492.5L956.8 485L972.4 478L988.3 471.6L1004.3 465.7L1020.6 460.4L1037.1 455.6L1053.8 451.4L1070.6 447.8L1087.6 444.8L1104.6 442.4L1121.8 440.6L1139 439.3L1156.2 438.7L1173.5 438.6L1190.7 439.2L1207.9 440.3L1225.1 442L1242.1 444.3L1259.1 447.2L1276 450.7L1292.7 454.8L1309.2 459.4L1325.5 464.7L1341.7 470.4L1357.6 476.8L1373.2 483.7L1388.6 491.1L1403.6 499.1L1418.4 507.6L1432.8 516.6L1446.8 526.1L1460.4 536.1L1473.7 546.6L1486.5 557.6L1498.8 569L1510.7 580.8L1522.2 593.1L1533.1 605.8L1543.5 618.9L1553.4 632.4L1562.7 646.2L1571.4 660.3L1579.6 674.8L1587.1 689.6L1594.1 704.7L1600.4 720L1606.1 735.6Z" fill-rule="evenodd" fill="url(#gOut)"/>
<path d="M1611.2 751.4L1615.5 767.4L1619.2 783.6L1622.3 799.9L1624.6 816.3L1626.2 832.9L1627.2 849.5L1627.4 866.2L1626.9 882.9L1625.7 899.6L1623.8 916.2L1621.2 932.9L1617.8 949.4L1613.7 965.8L1608.9 982.1L1603.4 998.3L1597.2 1014.2L1590.3 1030L1582.7 1045.5L1574.4 1060.7L1565.5 1075.7L1555.8 1090.3L1545.6 1104.6L1534.7 1118.5L1523.1 1132L1511 1145.1L1498.3 1157.7L1485 1169.9L1471.2 1181.5L1456.9 1192.7L1442 1203.3L1426.7 1213.4L1411 1222.9L1394.8 1231.8L1378.2 1240.1L1361.2 1247.8L1343.9 1254.8L1326.3 1261.1L1308.4 1266.8L1290.3 1271.9L1271.9 1276.2L1253.4 1279.8L1234.7 1282.8L1215.9 1285L1196.9 1286.5L1178 1287.3L1159 1287.3L1140 1286.7L1121.1 1285.3L1102.3 1283.2L1083.5 1280.4L1065 1276.9L1046.6 1272.7L1028.4 1267.8L1010.4 1262.2L992.8 1256L975.4 1249.1L958.4 1241.5L941.7 1233.4L925.4 1224.6L909.6 1215.2L894.2 1205.2L879.2 1194.7L864.8 1183.6L850.9 1172L837.5 1160L824.7 1147.4L812.4 1134.4L800.8 1121L789.8 1107.1L779.4 1092.9L769.6 1078.4L760.5 1063.5L752.1 1048.3L744.4 1032.8L737.3 1017.1L731 1001.2L725.3 985.1L720.4 968.8L716.2 952.4L712.7 935.9L709.9 919.3L707.8 902.6L706.5 885.9L705.8 869.2L705.9 852.5L706.7 835.9L708.2 819.3L710.4 802.9L713.3 786.5L716.9 770.3L721.1 754.3L726 738.5L731.6 722.9L737.8 707.5L744.6 692.4L752 677.5L760.1 663L768.7 648.8L777.9 634.9L787.7 621.3L798 608.2L808.8 595.4L820.1 583.1L831.9 571.1L844.2 559.6L856.9 548.6L870 538L883.6 527.9L897.6 518.3L911.9 509.2L926.5 500.6L941.5 492.5L956.8 485L972.4 478L988.3 471.6L1004.3 465.7L1020.6 460.4L1037.1 455.6L1053.8 451.4L1070.6 447.8L1087.6 444.8L1104.6 442.4L1121.8 440.6L1139 439.3L1156.2 438.7L1173.5 438.6L1190.7 439.2L1207.9 440.3L1225.1 442L1242.1 444.3L1259.1 447.2L1276 450.7L1292.7 454.8L1309.2 459.4L1325.5 464.7L1341.7 470.4L1357.6 476.8L1373.2 483.7L1388.6 491.1L1403.6 499.1L1418.4 507.6L1432.8 516.6L1446.8 526.1L1460.4 536.1L1473.7 546.6L1486.5 557.6L1498.8 569L1510.7 580.8L1522.2 593.1L1533.1 605.8L1543.5 618.9L1553.4 632.4L1562.7 646.2L1571.4 660.3L1579.6 674.8L1587.1 689.6L1594.1 704.7L1600.4 720L1606.1 735.6ZM1596.1 754.5L1600.4 769.9L1603.9 785.6L1606.8 801.3L1609 817.2L1610.6 833.2L1611.5 849.2L1611.6 865.3L1611.2 881.5L1610 897.6L1608.1 913.7L1605.5 929.7L1602.2 945.7L1598.3 961.6L1593.6 977.3L1588.3 992.9L1582.3 1008.3L1575.6 1023.5L1568.2 1038.4L1560.2 1053.1L1551.5 1067.5L1542.2 1081.6L1532.3 1095.4L1521.7 1108.8L1510.6 1121.8L1498.9 1134.4L1486.6 1146.6L1473.8 1158.3L1460.5 1169.6L1446.6 1180.3L1432.3 1190.5L1417.5 1200.2L1402.3 1209.4L1386.7 1218L1370.7 1226L1354.3 1233.3L1337.6 1240.1L1320.6 1246.2L1303.4 1251.7L1285.9 1256.6L1268.2 1260.7L1250.3 1264.2L1232.2 1267L1214.1 1269.2L1195.9 1270.6L1177.6 1271.4L1159.3 1271.4L1141 1270.8L1122.7 1269.5L1104.6 1267.5L1086.5 1264.8L1068.6 1261.4L1050.8 1257.4L1033.3 1252.7L1016 1247.3L999 1241.3L982.2 1234.6L965.8 1227.3L949.7 1219.5L934 1211L918.7 1202L903.8 1192.4L889.4 1182.2L875.5 1171.6L862 1160.4L849.1 1148.8L836.7 1136.7L824.9 1124.1L813.6 1111.2L803 1097.9L792.9 1084.2L783.5 1070.1L774.7 1055.8L766.5 1041.1L759 1026.2L752.2 1011.1L746.1 995.7L740.6 980.2L735.8 964.5L731.7 948.6L728.3 932.7L725.6 916.6L723.5 900.6L722.2 884.4L721.6 868.3L721.6 852.2L722.4 836.1L723.8 820.1L725.9 804.2L728.6 788.4L732.1 772.8L736.1 757.3L740.8 742L746.2 726.9L752.2 712L758.7 697.4L765.9 683.1L773.7 669L782 655.2L790.8 641.8L800.3 628.7L810.2 616L820.6 603.6L831.6 591.7L843 580.1L854.8 569L867.1 558.3L879.8 548.1L892.9 538.3L906.4 529L920.2 520.2L934.4 511.8L948.9 504L963.7 496.7L978.8 490L994.1 483.7L1009.6 478L1025.4 472.9L1041.4 468.2L1057.5 464.2L1073.8 460.7L1090.2 457.8L1106.7 455.4L1123.2 453.7L1139.9 452.5L1156.6 451.8L1173.2 451.8L1189.9 452.3L1206.6 453.4L1223.2 455.1L1239.7 457.3L1256.1 460.1L1272.4 463.5L1288.6 467.5L1304.5 472L1320.4 477L1336 482.6L1351.3 488.8L1366.4 495.4L1381.3 502.6L1395.9 510.4L1410.1 518.6L1424 527.3L1437.6 536.5L1450.7 546.2L1463.5 556.4L1475.9 567L1487.8 578L1499.3 589.5L1510.4 601.4L1520.9 613.7L1530.9 626.3L1540.5 639.4L1549.5 652.7L1557.9 666.4L1565.8 680.4L1573 694.7L1579.7 709.3L1585.8 724.1L1591.3 739.2Z" fill-rule="evenodd" fill="#ffff70" stroke="#ffff70" stroke-width="2"/>
<path d="M1596.1 754.5L1600.4 769.9L1603.9 785.6L1606.8 801.3L1609 817.2L1610.6 833.2L1611.5 849.2L1611.6 865.3L1611.2 881.5L1610 897.6L1608.1 913.7L1605.5 929.7L1602.2 945.7L1598.3 961.6L1593.6 977.3L1588.3 992.9L1582.3 1008.3L1575.6 1023.5L1568.2 1038.4L1560.2 1053.1L1551.5 1067.5L1542.2 1081.6L1532.3 1095.4L1521.7 1108.8L1510.6 1121.8L1498.9 1134.4L1486.6 1146.6L1473.8 1158.3L1460.5 1169.6L1446.6 1180.3L1432.3 1190.5L1417.5 1200.2L1402.3 1209.4L1386.7 1218L1370.7 1226L1354.3 1233.3L1337.6 1240.1L1320.6 1246.2L1303.4 1251.7L1285.9 1256.6L1268.2 1260.7L1250.3 1264.2L1232.2 1267L1214.1 1269.2L1195.9 1270.6L1177.6 1271.4L1159.3 1271.4L1141 1270.8L1122.7 1269.5L1104.6 1267.5L1086.5 1264.8L1068.6 1261.4L1050.8 1257.4L1033.3 1252.7L1016 1247.3L999 1241.3L982.2 1234.6L965.8 1227.3L949.7 1219.5L934 1211L918.7 1202L903.8 1192.4L889.4 1182.2L875.5 1171.6L862 1160.4L849.1 1148.8L836.7 1136.7L824.9 1124.1L813.6 1111.2L803 1097.9L792.9 1084.2L783.5 1070.1L774.7 1055.8L766.5 1041.1L759 1026.2L752.2 1011.1L746.1 995.7L740.6 980.2L735.8 964.5L731.7 948.6L728.3 932.7L725.6 916.6L723.5 900.6L722.2 884.4L721.6 868.3L721.6 852.2L722.4 836.1L723.8 820.1L725.9 804.2L728.6 788.4L732.1 772.8L736.1 757.3L740.8 742L746.2 726.9L752.2 712L758.7 697.4L765.9 683.1L773.7 669L782 655.2L790.8 641.8L800.3 628.7L810.2 616L820.6 603.6L831.6 591.7L843 580.1L854.8 569L867.1 558.3L879.8 548.1L892.9 538.3L906.4 529L920.2 520.2L934.4 511.8L948.9 504L963.7 496.7L978.8 490L994.1 483.7L1009.6 478L1025.4 472.9L1041.4 468.2L1057.5 464.2L1073.8 460.7L1090.2 457.8L1106.7 455.4L1123.2 453.7L1139.9 452.5L1156.6 451.8L1173.2 451.8L1189.9 452.3L1206.6 453.4L1223.2 455.1L1239.7 457.3L1256.1 460.1L1272.4 463.5L1288.6 467.5L1304.5 472L1320.4 477L1336 482.6L1351.3 488.8L1366.4 495.4L1381.3 502.6L1395.9 510.4L1410.1 518.6L1424 527.3L1437.6 536.5L1450.7 546.2L1463.5 556.4L1475.9 567L1487.8 578L1499.3 589.5L1510.4 601.4L1520.9 613.7L1530.9 626.3L1540.5 639.4L1549.5 652.7L1557.9 666.4L1565.8 680.4L1573 694.7L1579.7 709.3L1585.8 724.1L1591.3 739.2ZM1587.1 790.2L1591.2 805.4L1594.7 820.8L1597.5 836.3L1599.7 851.9L1601.2 867.6L1602 883.4L1602.2 899.2L1601.7 915.1L1600.5 930.9L1598.7 946.7L1596.1 962.5L1592.9 978.2L1589 993.7L1584.4 1009.2L1579.2 1024.5L1573.3 1039.6L1566.7 1054.5L1559.5 1069.2L1551.7 1083.6L1543.2 1097.8L1534 1111.6L1524.3 1125.1L1514 1138.3L1503.1 1151L1491.6 1163.4L1479.6 1175.4L1467.1 1186.9L1454 1197.9L1440.5 1208.4L1426.4 1218.5L1412 1228L1397.1 1237L1381.8 1245.4L1366.2 1253.2L1350.1 1260.5L1333.8 1267.1L1317.2 1273.1L1300.3 1278.5L1283.2 1283.2L1265.9 1287.3L1248.4 1290.8L1230.8 1293.5L1213 1295.6L1195.2 1297L1177.3 1297.8L1159.4 1297.8L1141.5 1297.2L1123.7 1295.9L1105.9 1294L1088.3 1291.3L1070.8 1288L1053.4 1284L1036.2 1279.4L1019.3 1274.1L1002.6 1268.2L986.3 1261.7L970.2 1254.6L954.5 1246.9L939.1 1238.6L924.1 1229.7L909.6 1220.3L895.5 1210.3L881.8 1199.9L868.7 1188.9L856 1177.5L843.9 1165.6L832.3 1153.3L821.3 1140.6L810.9 1127.5L801 1114.1L791.8 1100.3L783.2 1086.2L775.2 1071.9L767.8 1057.2L761.1 1042.4L755.1 1027.3L749.7 1012L745 996.6L741 981L737.6 965.4L735 949.6L733 933.8L731.6 918L731 902.1L731 886.3L731.7 870.5L733.1 854.8L735.1 839.1L737.8 823.6L741.2 808.2L745.1 793L749.7 778L755 763.1L760.8 748.5L767.2 734.1L774.2 720L781.8 706.2L789.9 692.7L798.6 679.4L807.8 666.6L817.5 654.1L827.7 641.9L838.4 630.1L849.6 618.8L861.2 607.8L873.2 597.3L885.7 587.2L898.5 577.6L911.7 568.5L925.2 559.8L939.1 551.6L953.3 543.9L967.8 536.7L982.6 530L997.6 523.9L1012.8 518.3L1028.3 513.2L1043.9 508.7L1059.7 504.7L1075.6 501.3L1091.7 498.4L1107.9 496.1L1124.1 494.3L1140.4 493.1L1156.7 492.5L1173.1 492.5L1189.4 493L1205.7 494.1L1222 495.7L1238.2 497.9L1254.3 500.7L1270.2 504L1286.1 507.9L1301.7 512.3L1317.2 517.3L1332.5 522.8L1347.6 528.9L1362.4 535.4L1376.9 542.5L1391.2 550.1L1405.1 558.2L1418.7 566.8L1432 575.9L1444.9 585.4L1457.4 595.4L1469.6 605.9L1481.2 616.7L1492.5 628L1503.3 639.7L1513.6 651.8L1523.4 664.3L1532.7 677.1L1541.5 690.2L1549.8 703.7L1557.5 717.5L1564.6 731.5L1571.1 745.9L1577.1 760.4L1582.4 775.2Z" fill-rule="evenodd" fill="url(#gIn)" clip-path="url(#cE2)"/>
<path d="M1587.1 790.2L1591.2 805.4L1594.7 820.8L1597.5 836.3L1599.7 851.9L1601.2 867.6L1602 883.4L1602.2 899.2L1601.7 915.1L1600.5 930.9L1598.7 946.7L1596.1 962.5L1592.9 978.2L1589 993.7L1584.4 1009.2L1579.2 1024.5L1573.3 1039.6L1566.7 1054.5L1559.5 1069.2L1551.7 1083.6L1543.2 1097.8L1534 1111.6L1524.3 1125.1L1514 1138.3L1503.1 1151L1491.6 1163.4L1479.6 1175.4L1467.1 1186.9L1454 1197.9L1440.5 1208.4L1426.4 1218.5L1412 1228L1397.1 1237L1381.8 1245.4L1366.2 1253.2L1350.1 1260.5L1333.8 1267.1L1317.2 1273.1L1300.3 1278.5L1283.2 1283.2L1265.9 1287.3L1248.4 1290.8L1230.8 1293.5L1213 1295.6L1195.2 1297L1177.3 1297.8L1159.4 1297.8L1141.5 1297.2L1123.7 1295.9L1105.9 1294L1088.3 1291.3L1070.8 1288L1053.4 1284L1036.2 1279.4L1019.3 1274.1L1002.6 1268.2L986.3 1261.7L970.2 1254.6L954.5 1246.9L939.1 1238.6L924.1 1229.7L909.6 1220.3L895.5 1210.3L881.8 1199.9L868.7 1188.9L856 1177.5L843.9 1165.6L832.3 1153.3L821.3 1140.6L810.9 1127.5L801 1114.1L791.8 1100.3L783.2 1086.2L775.2 1071.9L767.8 1057.2L761.1 1042.4L755.1 1027.3L749.7 1012L745 996.6L741 981L737.6 965.4L735 949.6L733 933.8L731.6 918L731 902.1L731 886.3L731.7 870.5L733.1 854.8L735.1 839.1L737.8 823.6L741.2 808.2L745.1 793L749.7 778L755 763.1L760.8 748.5L767.2 734.1L774.2 720L781.8 706.2L789.9 692.7L798.6 679.4L807.8 666.6L817.5 654.1L827.7 641.9L838.4 630.1L849.6 618.8L861.2 607.8L873.2 597.3L885.7 587.2L898.5 577.6L911.7 568.5L925.2 559.8L939.1 551.6L953.3 543.9L967.8 536.7L982.6 530L997.6 523.9L1012.8 518.3L1028.3 513.2L1043.9 508.7L1059.7 504.7L1075.6 501.3L1091.7 498.4L1107.9 496.1L1124.1 494.3L1140.4 493.1L1156.7 492.5L1173.1 492.5L1189.4 493L1205.7 494.1L1222 495.7L1238.2 497.9L1254.3 500.7L1270.2 504L1286.1 507.9L1301.7 512.3L1317.2 517.3L1332.5 522.8L1347.6 528.9L1362.4 535.4L1376.9 542.5L1391.2 550.1L1405.1 558.2L1418.7 566.8L1432 575.9L1444.9 585.4L1457.4 595.4L1469.6 605.9L1481.2 616.7L1492.5 628L1503.3 639.7L1513.6 651.8L1523.4 664.3L1532.7 677.1L1541.5 690.2L1549.8 703.7L1557.5 717.5L1564.6 731.5L1571.1 745.9L1577.1 760.4L1582.4 775.2ZM1501.2 808L1504.4 820.1L1507 832.3L1509.1 844.6L1510.7 857.1L1511.8 869.5L1512.3 882.1L1512.3 894.6L1511.8 907.2L1510.7 919.7L1509.1 932.3L1507 944.7L1504.3 957.1L1501.1 969.4L1497.4 981.6L1493.1 993.7L1488.3 1005.6L1483 1017.4L1477.2 1028.9L1470.9 1040.3L1464.1 1051.4L1456.8 1062.3L1449 1072.9L1440.8 1083.2L1432.1 1093.2L1423 1102.9L1413.5 1112.3L1403.5 1121.3L1393.1 1129.9L1382.4 1138.2L1371.3 1146L1359.9 1153.5L1348.1 1160.5L1336 1167.1L1323.7 1173.2L1311.1 1178.8L1298.2 1184L1285.1 1188.7L1271.8 1192.9L1258.3 1196.6L1244.7 1199.8L1230.9 1202.4L1217.1 1204.6L1203.1 1206.2L1189.1 1207.3L1175 1207.9L1161 1208L1146.9 1207.5L1132.9 1206.5L1118.9 1204.9L1105 1202.9L1091.2 1200.3L1077.5 1197.2L1064 1193.6L1050.7 1189.5L1037.6 1184.9L1024.6 1179.8L1012 1174.2L999.6 1168.2L987.4 1161.7L975.6 1154.8L964.1 1147.4L952.9 1139.7L942.1 1131.5L931.7 1122.9L921.7 1114L912 1104.7L902.8 1095L894.1 1085.1L885.7 1074.8L877.9 1064.2L870.5 1053.4L863.6 1042.3L857.2 1031L851.2 1019.5L845.8 1007.8L840.9 995.9L836.6 983.9L832.7 971.7L829.4 959.4L826.6 947L824.4 934.5L822.7 922L821.5 909.5L820.9 896.9L820.8 884.4L821.2 871.8L822.2 859.3L823.7 846.9L825.7 834.6L828.2 822.3L831.3 810.2L834.8 798.2L838.8 786.3L843.4 774.6L848.4 763.2L853.9 751.9L859.8 740.8L866.2 730L873 719.4L880.3 709.1L888 699L896 689.3L904.5 679.8L913.3 670.7L922.5 661.9L932.1 653.4L942 645.3L952.2 637.6L962.7 630.2L973.5 623.2L984.6 616.6L995.9 610.4L1007.5 604.6L1019.3 599.2L1031.3 594.3L1043.4 589.7L1055.8 585.6L1068.3 582L1081 578.8L1093.7 576L1106.6 573.7L1119.5 571.8L1132.5 570.4L1145.6 569.4L1158.7 568.9L1171.8 568.9L1184.9 569.3L1198 570.2L1211 571.5L1223.9 573.3L1236.8 575.5L1249.6 578.2L1262.3 581.4L1274.8 584.9L1287.2 589L1299.4 593.4L1311.5 598.3L1323.3 603.6L1334.9 609.3L1346.3 615.4L1357.4 622L1368.3 628.9L1378.8 636.2L1389.1 643.9L1399.1 651.9L1408.7 660.3L1418 669.1L1426.9 678.1L1435.4 687.5L1443.6 697.2L1451.4 707.2L1458.7 717.5L1465.6 728L1472.1 738.8L1478.1 749.8L1483.7 761.1L1488.8 772.5L1493.4 784.2L1497.6 796Z" fill-rule="evenodd" fill="#ffff70" clip-path="url(#cE2)"/>
<path d="M1501.2 808L1504.4 820.1L1507 832.3L1509.1 844.6L1510.7 857.1L1511.8 869.5L1512.3 882.1L1512.3 894.6L1511.8 907.2L1510.7 919.7L1509.1 932.3L1507 944.7L1504.3 957.1L1501.1 969.4L1497.4 981.6L1493.1 993.7L1488.3 1005.6L1483 1017.4L1477.2 1028.9L1470.9 1040.3L1464.1 1051.4L1456.8 1062.3L1449 1072.9L1440.8 1083.2L1432.1 1093.2L1423 1102.9L1413.5 1112.3L1403.5 1121.3L1393.1 1129.9L1382.4 1138.2L1371.3 1146L1359.9 1153.5L1348.1 1160.5L1336 1167.1L1323.7 1173.2L1311.1 1178.8L1298.2 1184L1285.1 1188.7L1271.8 1192.9L1258.3 1196.6L1244.7 1199.8L1230.9 1202.4L1217.1 1204.6L1203.1 1206.2L1189.1 1207.3L1175 1207.9L1161 1208L1146.9 1207.5L1132.9 1206.5L1118.9 1204.9L1105 1202.9L1091.2 1200.3L1077.5 1197.2L1064 1193.6L1050.7 1189.5L1037.6 1184.9L1024.6 1179.8L1012 1174.2L999.6 1168.2L987.4 1161.7L975.6 1154.8L964.1 1147.4L952.9 1139.7L942.1 1131.5L931.7 1122.9L921.7 1114L912 1104.7L902.8 1095L894.1 1085.1L885.7 1074.8L877.9 1064.2L870.5 1053.4L863.6 1042.3L857.2 1031L851.2 1019.5L845.8 1007.8L840.9 995.9L836.6 983.9L832.7 971.7L829.4 959.4L826.6 947L824.4 934.5L822.7 922L821.5 909.5L820.9 896.9L820.8 884.4L821.2 871.8L822.2 859.3L823.7 846.9L825.7 834.6L828.2 822.3L831.3 810.2L834.8 798.2L838.8 786.3L843.4 774.6L848.4 763.2L853.9 751.9L859.8 740.8L866.2 730L873 719.4L880.3 709.1L888 699L896 689.3L904.5 679.8L913.3 670.7L922.5 661.9L932.1 653.4L942 645.3L952.2 637.6L962.7 630.2L973.5 623.2L984.6 616.6L995.9 610.4L1007.5 604.6L1019.3 599.2L1031.3 594.3L1043.4 589.7L1055.8 585.6L1068.3 582L1081 578.8L1093.7 576L1106.6 573.7L1119.5 571.8L1132.5 570.4L1145.6 569.4L1158.7 568.9L1171.8 568.9L1184.9 569.3L1198 570.2L1211 571.5L1223.9 573.3L1236.8 575.5L1249.6 578.2L1262.3 581.4L1274.8 584.9L1287.2 589L1299.4 593.4L1311.5 598.3L1323.3 603.6L1334.9 609.3L1346.3 615.4L1357.4 622L1368.3 628.9L1378.8 636.2L1389.1 643.9L1399.1 651.9L1408.7 660.3L1418 669.1L1426.9 678.1L1435.4 687.5L1443.6 697.2L1451.4 707.2L1458.7 717.5L1465.6 728L1472.1 738.8L1478.1 749.8L1483.7 761.1L1488.8 772.5L1493.4 784.2L1497.6 796ZM1500.1 813.5L1503.2 825.5L1505.9 837.7L1508 850L1509.6 862.4L1510.6 874.9L1511.2 887.4L1511.2 899.9L1510.7 912.4L1509.6 924.9L1508 937.4L1505.9 949.9L1503.2 962.2L1500 974.5L1496.3 986.7L1492 998.7L1487.3 1010.6L1482 1022.3L1476.2 1033.8L1469.9 1045.1L1463.1 1056.2L1455.8 1067.1L1448.1 1077.6L1439.9 1087.9L1431.2 1097.9L1422.1 1107.6L1412.6 1116.9L1402.7 1125.9L1392.4 1134.5L1381.7 1142.8L1370.6 1150.6L1359.2 1158L1347.5 1165L1335.5 1171.5L1323.1 1177.6L1310.6 1183.3L1297.7 1188.4L1284.7 1193.1L1271.4 1197.3L1258 1201L1244.4 1204.1L1230.7 1206.8L1216.9 1209L1203 1210.6L1189 1211.7L1175 1212.3L1161 1212.3L1147 1211.8L1133 1210.8L1119 1209.3L1105.2 1207.2L1091.5 1204.7L1077.8 1201.6L1064.4 1198L1051.1 1193.9L1038 1189.3L1025.1 1184.2L1012.5 1178.7L1000.1 1172.7L988.1 1166.2L976.3 1159.3L964.8 1152L953.7 1144.2L942.9 1136.1L932.5 1127.5L922.5 1118.6L912.9 1109.3L903.7 1099.7L895 1089.8L886.7 1079.5L878.9 1069L871.5 1058.2L864.6 1047.2L858.2 1035.9L852.3 1024.4L846.9 1012.7L842 1000.9L837.7 988.9L833.9 976.7L830.6 964.5L827.8 952.1L825.5 939.7L823.8 927.2L822.7 914.7L822 902.2L821.9 889.6L822.4 877.1L823.3 864.7L824.8 852.3L826.8 840L829.3 827.8L832.4 815.7L835.9 803.7L839.9 791.9L844.4 780.2L849.4 768.8L854.9 757.5L860.8 746.5L867.2 735.7L874 725.1L881.2 714.8L888.9 704.8L896.9 695.1L905.4 685.7L914.2 676.6L923.3 667.8L932.9 659.3L942.7 651.2L952.9 643.5L963.4 636.2L974.1 629.2L985.2 622.6L996.5 616.4L1008 610.6L1019.7 605.3L1031.7 600.3L1043.8 595.8L1056.2 591.7L1068.6 588.1L1081.2 584.9L1094 582.1L1106.8 579.8L1119.7 577.9L1132.7 576.5L1145.7 575.5L1158.7 575L1171.8 575L1184.8 575.4L1197.9 576.3L1210.8 577.6L1223.8 579.4L1236.6 581.6L1249.3 584.3L1262 587.4L1274.5 591L1286.8 595L1299 599.5L1311 604.3L1322.8 609.6L1334.4 615.3L1345.7 621.4L1356.8 628L1367.6 634.9L1378.2 642.1L1388.4 649.8L1398.3 657.8L1407.9 666.2L1417.2 674.9L1426 684L1434.6 693.3L1442.7 703L1450.4 713L1457.7 723.2L1464.6 733.7L1471.1 744.5L1477.1 755.5L1482.7 766.7L1487.7 778.1L1492.4 789.7L1496.5 801.5Z" fill-rule="evenodd" fill="#bfa95f" clip-path="url(#cE4)"/>
<path d="M1500.1 813.5L1503.2 825.5L1505.9 837.7L1508 850L1509.6 862.4L1510.6 874.9L1511.2 887.4L1511.2 899.9L1510.7 912.4L1509.6 924.9L1508 937.4L1505.9 949.9L1503.2 962.2L1500 974.5L1496.3 986.7L1492 998.7L1487.3 1010.6L1482 1022.3L1476.2 1033.8L1469.9 1045.1L1463.1 1056.2L1455.8 1067.1L1448.1 1077.6L1439.9 1087.9L1431.2 1097.9L1422.1 1107.6L1412.6 1116.9L1402.7 1125.9L1392.4 1134.5L1381.7 1142.8L1370.6 1150.6L1359.2 1158L1347.5 1165L1335.5 1171.5L1323.1 1177.6L1310.6 1183.3L1297.7 1188.4L1284.7 1193.1L1271.4 1197.3L1258 1201L1244.4 1204.1L1230.7 1206.8L1216.9 1209L1203 1210.6L1189 1211.7L1175 1212.3L1161 1212.3L1147 1211.8L1133 1210.8L1119 1209.3L1105.2 1207.2L1091.5 1204.7L1077.8 1201.6L1064.4 1198L1051.1 1193.9L1038 1189.3L1025.1 1184.2L1012.5 1178.7L1000.1 1172.7L988.1 1166.2L976.3 1159.3L964.8 1152L953.7 1144.2L942.9 1136.1L932.5 1127.5L922.5 1118.6L912.9 1109.3L903.7 1099.7L895 1089.8L886.7 1079.5L878.9 1069L871.5 1058.2L864.6 1047.2L858.2 1035.9L852.3 1024.4L846.9 1012.7L842 1000.9L837.7 988.9L833.9 976.7L830.6 964.5L827.8 952.1L825.5 939.7L823.8 927.2L822.7 914.7L822 902.2L821.9 889.6L822.4 877.1L823.3 864.7L824.8 852.3L826.8 840L829.3 827.8L832.4 815.7L835.9 803.7L839.9 791.9L844.4 780.2L849.4 768.8L854.9 757.5L860.8 746.5L867.2 735.7L874 725.1L881.2 714.8L888.9 704.8L896.9 695.1L905.4 685.7L914.2 676.6L923.3 667.8L932.9 659.3L942.7 651.2L952.9 643.5L963.4 636.2L974.1 629.2L985.2 622.6L996.5 616.4L1008 610.6L1019.7 605.3L1031.7 600.3L1043.8 595.8L1056.2 591.7L1068.6 588.1L1081.2 584.9L1094 582.1L1106.8 579.8L1119.7 577.9L1132.7 576.5L1145.7 575.5L1158.7 575L1171.8 575L1184.8 575.4L1197.9 576.3L1210.8 577.6L1223.8 579.4L1236.6 581.6L1249.3 584.3L1262 587.4L1274.5 591L1286.8 595L1299 599.5L1311 604.3L1322.8 609.6L1334.4 615.3L1345.7 621.4L1356.8 628L1367.6 634.9L1378.2 642.1L1388.4 649.8L1398.3 657.8L1407.9 666.2L1417.2 674.9L1426 684L1434.6 693.3L1442.7 703L1450.4 713L1457.7 723.2L1464.6 733.7L1471.1 744.5L1477.1 755.5L1482.7 766.7L1487.7 778.1L1492.4 789.7L1496.5 801.5Z" fill="#000" fill-opacity="0.535" clip-path="url(#cE4)"/>
<clipPath id="cE5"><path d="M1500.1 813.5L1503.2 825.5L1505.9 837.7L1508 850L1509.6 862.4L1510.6 874.9L1511.2 887.4L1511.2 899.9L1510.7 912.4L1509.6 924.9L1508 937.4L1505.9 949.9L1503.2 962.2L1500 974.5L1496.3 986.7L1492 998.7L1487.3 1010.6L1482 1022.3L1476.2 1033.8L1469.9 1045.1L1463.1 1056.2L1455.8 1067.1L1448.1 1077.6L1439.9 1087.9L1431.2 1097.9L1422.1 1107.6L1412.6 1116.9L1402.7 1125.9L1392.4 1134.5L1381.7 1142.8L1370.6 1150.6L1359.2 1158L1347.5 1165L1335.5 1171.5L1323.1 1177.6L1310.6 1183.3L1297.7 1188.4L1284.7 1193.1L1271.4 1197.3L1258 1201L1244.4 1204.1L1230.7 1206.8L1216.9 1209L1203 1210.6L1189 1211.7L1175 1212.3L1161 1212.3L1147 1211.8L1133 1210.8L1119 1209.3L1105.2 1207.2L1091.5 1204.7L1077.8 1201.6L1064.4 1198L1051.1 1193.9L1038 1189.3L1025.1 1184.2L1012.5 1178.7L1000.1 1172.7L988.1 1166.2L976.3 1159.3L964.8 1152L953.7 1144.2L942.9 1136.1L932.5 1127.5L922.5 1118.6L912.9 1109.3L903.7 1099.7L895 1089.8L886.7 1079.5L878.9 1069L871.5 1058.2L864.6 1047.2L858.2 1035.9L852.3 1024.4L846.9 1012.7L842 1000.9L837.7 988.9L833.9 976.7L830.6 964.5L827.8 952.1L825.5 939.7L823.8 927.2L822.7 914.7L822 902.2L821.9 889.6L822.4 877.1L823.3 864.7L824.8 852.3L826.8 840L829.3 827.8L832.4 815.7L835.9 803.7L839.9 791.9L844.4 780.2L849.4 768.8L854.9 757.5L860.8 746.5L867.2 735.7L874 725.1L881.2 714.8L888.9 704.8L896.9 695.1L905.4 685.7L914.2 676.6L923.3 667.8L932.9 659.3L942.7 651.2L952.9 643.5L963.4 636.2L974.1 629.2L985.2 622.6L996.5 616.4L1008 610.6L1019.7 605.3L1031.7 600.3L1043.8 595.8L1056.2 591.7L1068.6 588.1L1081.2 584.9L1094 582.1L1106.8 579.8L1119.7 577.9L1132.7 576.5L1145.7 575.5L1158.7 575L1171.8 575L1184.8 575.4L1197.9 576.3L1210.8 577.6L1223.8 579.4L1236.6 581.6L1249.3 584.3L1262 587.4L1274.5 591L1286.8 595L1299 599.5L1311 604.3L1322.8 609.6L1334.4 615.3L1345.7 621.4L1356.8 628L1367.6 634.9L1378.2 642.1L1388.4 649.8L1398.3 657.8L1407.9 666.2L1417.2 674.9L1426 684L1434.6 693.3L1442.7 703L1450.4 713L1457.7 723.2L1464.6 733.7L1471.1 744.5L1477.1 755.5L1482.7 766.7L1487.7 778.1L1492.4 789.7L1496.5 801.5Z"/></clipPath>
<g clip-path="url(#cE4)"><path d="M700 1257.5 L1700 1044" stroke="#4f80c6" stroke-width="2.2" clip-path="url(#cE5)"/></g>
<clipPath id="cE1"><path d="M1611.2 751.4L1615.5 767.4L1619.2 783.6L1622.3 799.9L1624.6 816.3L1626.2 832.9L1627.2 849.5L1627.4 866.2L1626.9 882.9L1625.7 899.6L1623.8 916.2L1621.2 932.9L1617.8 949.4L1613.7 965.8L1608.9 982.1L1603.4 998.3L1597.2 1014.2L1590.3 1030L1582.7 1045.5L1574.4 1060.7L1565.5 1075.7L1555.8 1090.3L1545.6 1104.6L1534.7 1118.5L1523.1 1132L1511 1145.1L1498.3 1157.7L1485 1169.9L1471.2 1181.5L1456.9 1192.7L1442 1203.3L1426.7 1213.4L1411 1222.9L1394.8 1231.8L1378.2 1240.1L1361.2 1247.8L1343.9 1254.8L1326.3 1261.1L1308.4 1266.8L1290.3 1271.9L1271.9 1276.2L1253.4 1279.8L1234.7 1282.8L1215.9 1285L1196.9 1286.5L1178 1287.3L1159 1287.3L1140 1286.7L1121.1 1285.3L1102.3 1283.2L1083.5 1280.4L1065 1276.9L1046.6 1272.7L1028.4 1267.8L1010.4 1262.2L992.8 1256L975.4 1249.1L958.4 1241.5L941.7 1233.4L925.4 1224.6L909.6 1215.2L894.2 1205.2L879.2 1194.7L864.8 1183.6L850.9 1172L837.5 1160L824.7 1147.4L812.4 1134.4L800.8 1121L789.8 1107.1L779.4 1092.9L769.6 1078.4L760.5 1063.5L752.1 1048.3L744.4 1032.8L737.3 1017.1L731 1001.2L725.3 985.1L720.4 968.8L716.2 952.4L712.7 935.9L709.9 919.3L707.8 902.6L706.5 885.9L705.8 869.2L705.9 852.5L706.7 835.9L708.2 819.3L710.4 802.9L713.3 786.5L716.9 770.3L721.1 754.3L726 738.5L731.6 722.9L737.8 707.5L744.6 692.4L752 677.5L760.1 663L768.7 648.8L777.9 634.9L787.7 621.3L798 608.2L808.8 595.4L820.1 583.1L831.9 571.1L844.2 559.6L856.9 548.6L870 538L883.6 527.9L897.6 518.3L911.9 509.2L926.5 500.6L941.5 492.5L956.8 485L972.4 478L988.3 471.6L1004.3 465.7L1020.6 460.4L1037.1 455.6L1053.8 451.4L1070.6 447.8L1087.6 444.8L1104.6 442.4L1121.8 440.6L1139 439.3L1156.2 438.7L1173.5 438.6L1190.7 439.2L1207.9 440.3L1225.1 442L1242.1 444.3L1259.1 447.2L1276 450.7L1292.7 454.8L1309.2 459.4L1325.5 464.7L1341.7 470.4L1357.6 476.8L1373.2 483.7L1388.6 491.1L1403.6 499.1L1418.4 507.6L1432.8 516.6L1446.8 526.1L1460.4 536.1L1473.7 546.6L1486.5 557.6L1498.8 569L1510.7 580.8L1522.2 593.1L1533.1 605.8L1543.5 618.9L1553.4 632.4L1562.7 646.2L1571.4 660.3L1579.6 674.8L1587.1 689.6L1594.1 704.7L1600.4 720L1606.1 735.6Z"/></clipPath>
<path d="M700 1257.5 L1700 1044" stroke="#3f7890" stroke-opacity="0.6" stroke-width="0.9"/>
</svg>
<div style="position:absolute;left:2205px;top:14px;width:798px;height:1455px;box-sizing:border-box;background:#fff;border:2px solid #b4b4b4;border-radius:4px;"></div>
<div style="position:absolute;left:2207px;top:16px;width:794px;height:59.5px;box-sizing:border-box;background:#f0f0f0;border-radius:2px 2px 0 0;"></div>
<div style="position:absolute;left:2207px;top:75px;width:794px;height:2px;box-sizing:border-box;background:#b4b4b4;"></div>
<svg style="position:absolute;left:2961px;top:35px" width="21" height="21" viewBox="0 0 21 21"><path d="M4.2 4.2L16.6 16.6M16.6 4.2L4.2 16.6" stroke="#555" stroke-width="1.8" fill="none"/></svg>
<div style="position:absolute;left:2392px;top:100px;width:587px;height:45px;box-sizing:border-box;border:2px solid #c0c0c0;border-radius:5px;background:#fff;"></div>
<svg style="position:absolute;left:2893px;top:110.5px" width="22" height="22" viewBox="-11 -11 22 22"><path d="M0.0 -9.6L2.8 -3.0L9.9 -2.4L4.5 2.3L6.1 9.2L0.0 5.5L-6.1 9.2L-4.5 2.3L-9.9 -2.4L-2.8 -3.0Z" fill="#595959"/></svg>
<svg style="position:absolute;left:2938.8px;top:116.95px" width="19" height="12" viewBox="0 0 19 12"><path d="M2 2L9.5 9.5L17 2" fill="none" stroke="#4d4d4d" stroke-width="2"/></svg>
<div style="position:absolute;left:2249px;top:165.5px;width:615.5px;height:51px;box-sizing:border-box;border:1px solid #c6c6c6;border-radius:3px;background:#fff;"></div>
<svg style="position:absolute;left:2268px;top:174px" width="36" height="36" viewBox="2268 174 36 36"><circle cx="2289.6" cy="187.2" r="7.6" fill="none" stroke="#111" stroke-width="2.5"/><path d="M2284.3 192.7L2273.8 203.2" stroke="#111" stroke-width="2.6" fill="none"/></svg>
<div style="position:absolute;left:2891px;top:176.9px;width:32px;height:3.4px;box-sizing:border-box;background:#6b6b6b;"></div>
<div style="position:absolute;left:2891px;top:189.3px;width:32px;height:3.4px;box-sizing:border-box;background:#6b6b6b;"></div>
<div style="position:absolute;left:2891px;top:201.5px;width:32px;height:3.4px;box-sizing:border-box;background:#6b6b6b;"></div>
<div style="position:absolute;left:2953px;top:238.4px;width:16px;height:314.2px;box-sizing:border-box;background:#0c0b54;border-radius:8px;"></div>
<div style="position:absolute;left:2207px;top:230px;width:794px;height:1132.5px;overflow:hidden">
<div style="position:absolute;left:-2207px;top:-230px">
<div style="position:absolute;left:2249px;top:240px;width:691px;height:42px;box-sizing:border-box;background:#f0f0f0;"></div>
<svg style="position:absolute;left:2898.9px;top:254.75px" width="19" height="12" viewBox="0 0 19 12"><path d="M2 2L9.5 9.5L17 2" fill="none" stroke="#4d4d4d" stroke-width="2"/></svg>
<div style="position:absolute;left:2269.2px;top:245.2px;width:9px;height:3.6px;box-sizing:border-box;background:#262626;"></div>
<div style="position:absolute;left:2269.2px;top:254.1px;width:19.4px;height:6.6px;box-sizing:border-box;background:#262626;"></div>
<div style="position:absolute;left:2269.2px;top:266.2px;width:32px;height:10.6px;box-sizing:border-box;background:#262626;"></div>
<div style="position:absolute;left:2709px;top:286.5px;width:231px;height:41px;box-sizing:border-box;border:2px solid #bcbcbc;border-radius:4px;background:#fff;"></div>
<svg style="position:absolute;left:2660.5px;top:292px" width="30" height="30" viewBox="-15 -15 30 30"><g transform="rotate(-45)" fill="none" stroke="#6a6a6a" stroke-width="2.7"><path d="M0.3 -6.2H9A4.2 4.2 0 0 1 9 2.2H1.6"/><path d="M-0.3 6.2H-9A4.2 4.2 0 0 1 -9 -2.2H-1.6"/></g></svg>
<div style="position:absolute;left:2709px;top:332.5px;width:231px;height:41px;box-sizing:border-box;border:2px solid #bcbcbc;border-radius:4px;background:#fff;"></div>
<svg style="position:absolute;left:2660.5px;top:338px" width="30" height="30" viewBox="-15 -15 30 30"><g transform="rotate(-45)" fill="none" stroke="#6a6a6a" stroke-width="2.7"><path d="M0.3 -6.2H9A4.2 4.2 0 0 1 9 2.2H1.6"/><path d="M-0.3 6.2H-9A4.2 4.2 0 0 1 -9 -2.2H-1.6"/></g></svg>
<div style="position:absolute;left:2709px;top:378.5px;width:231px;height:41px;box-sizing:border-box;border:2px solid #bcbcbc;border-radius:4px;background:#fff;"></div>
<div style="position:absolute;left:2709px;top:424.5px;width:231px;height:41px;box-sizing:border-box;border:2px solid #bcbcbc;border-radius:4px;background:#fff;"></div>
<div style="position:absolute;left:2709px;top:470.5px;width:231px;height:41px;box-sizing:border-box;border:2px solid #bcbcbc;border-radius:4px;background:#fff;"></div>
<div style="position:absolute;left:2709px;top:516.5px;width:231px;height:41px;box-sizing:border-box;border:2px solid #bcbcbc;border-radius:4px;background:#fff;"></div>
<div style="position:absolute;left:2709px;top:562.5px;width:231px;height:41px;box-sizing:border-box;border:2px solid #bcbcbc;border-radius:4px;background:#fff;"></div>
<div style="position:absolute;left:2709px;top:608.5px;width:231px;height:41px;box-sizing:border-box;border:2px solid #bcbcbc;border-radius:4px;background:#fff;"></div>
<div style="position:absolute;left:2709px;top:654.5px;width:231px;height:41px;box-sizing:border-box;border:2px solid #bcbcbc;border-radius:4px;background:#fff;"></div>
<div style="position:absolute;left:2249px;top:700px;width:691px;height:42px;box-sizing:border-box;background:#f0f0f0;"></div>
<svg style="position:absolute;left:2898.9px;top:714.75px" width="19" height="12" viewBox="0 0 19 12"><path d="M2 2L9.5 9.5L17 2" fill="none" stroke="#4d4d4d" stroke-width="2"/></svg>
<svg style="position:absolute;left:2269.3px;top:705px" width="32" height="32" viewBox="0 0 32 32"><rect x="1.7" y="1.7" width="28.2" height="28.4" rx="3.5" fill="none" stroke="#262626" stroke-width="3.4"/><g fill="#262626"><circle cx="8.5" cy="8.8" r="1.65"/><circle cx="8.5" cy="15.9" r="1.65"/><circle cx="8.5" cy="22.9" r="1.65"/><circle cx="15.8" cy="8.8" r="1.65"/><circle cx="15.8" cy="22.9" r="1.65"/><circle cx="23" cy="8.8" r="1.65"/><circle cx="23" cy="15.9" r="1.65"/><circle cx="23" cy="22.9" r="1.65"/></g></svg>
<div style="position:absolute;left:2709px;top:746.5px;width:231px;height:41px;box-sizing:border-box;border:2px solid #bcbcbc;border-radius:4px;background:#fff;"></div>
<svg style="position:absolute;left:2660px;top:750px" width="30" height="32" viewBox="2660 750 30 32"><g fill="none" stroke="#555" stroke-width="2.3" stroke-linecap="round"><path d="M2665 778.6Q2670.5 779.6 2672 772L2675.2 759.5Q2676.8 753.8 2680.6 755.2"/><path d="M2670.2 764.4H2677.4" stroke-linecap="butt"/><path d="M2677.7 770.7L2684.7 777.7M2684.7 770.7L2677.7 777.7" stroke-width="2.4" stroke-linecap="butt"/></g></svg>
<div style="position:absolute;left:2709px;top:792.5px;width:231px;height:41px;box-sizing:border-box;border:2px solid #bcbcbc;border-radius:4px;background:#fff;"></div>
<div style="position:absolute;left:2709.5px;top:838.5px;width:41px;height:41px;box-sizing:border-box;border:1px solid #c2c2c2;border-radius:4px;background:#fff;"></div>
<div style="position:absolute;left:2709px;top:884.5px;width:231px;height:41px;box-sizing:border-box;border:2px solid #bcbcbc;border-radius:4px;background:#fff;"></div>
<svg style="position:absolute;left:2898.9px;top:899.75px" width="19" height="12" viewBox="0 0 19 12"><path d="M2 2L9.5 9.5L17 2" fill="none" stroke="#4d4d4d" stroke-width="2"/></svg>
<div style="position:absolute;left:2709px;top:930.5px;width:231px;height:41px;box-sizing:border-box;border:2px solid #bcbcbc;border-radius:4px;background:#fff;"></div>
<div style="position:absolute;left:2249px;top:976px;width:691px;height:42px;box-sizing:border-box;background:#f0f0f0;"></div>
<svg style="position:absolute;left:2898.9px;top:990.75px" width="19" height="12" viewBox="0 0 19 12"><path d="M2 2L9.5 9.5L17 2" fill="none" stroke="#4d4d4d" stroke-width="2"/></svg>
<svg style="position:absolute;left:2269.7px;top:980px" width="31" height="34" viewBox="0 0 31 34"><g fill="#262626"><path d="M0 5.2Q2 1.2 5 1.2L25.6 1.2Q28.6 1.2 30.6 5.2Z"/><path d="M0 29Q2 33 5 33L25.6 33Q28.6 33 30.6 29Z"/><circle cx="4.8" cy="9.9" r="1.65"/><circle cx="4.8" cy="24.1" r="1.65"/><circle cx="11.8" cy="9.9" r="1.65"/><circle cx="11.8" cy="24.1" r="1.65"/><circle cx="18.9" cy="9.9" r="1.65"/><circle cx="18.9" cy="24.1" r="1.65"/><circle cx="25.9" cy="9.9" r="1.65"/><circle cx="25.9" cy="24.1" r="1.65"/></g></svg>
<div style="position:absolute;left:2709px;top:1022.5px;width:231px;height:41px;box-sizing:border-box;border:2px solid #bcbcbc;border-radius:4px;background:#fff;"></div>
<div style="position:absolute;left:2709px;top:1068.5px;width:231px;height:41px;box-sizing:border-box;border:2px solid #bcbcbc;border-radius:4px;background:#fff;"></div>
<div style="position:absolute;left:2709px;top:1114.5px;width:231px;height:41px;box-sizing:border-box;border:2px solid #bcbcbc;border-radius:4px;background:#fff;"></div>
<div style="position:absolute;left:2709px;top:1160.5px;width:231px;height:41px;box-sizing:border-box;border:2px solid #bcbcbc;border-radius:4px;background:#fff;"></div>
<div style="position:absolute;left:2709px;top:1206.5px;width:231px;height:41px;box-sizing:border-box;border:2px solid #bcbcbc;border-radius:4px;background:#fff;"></div>
<div style="position:absolute;left:2709.5px;top:1252.5px;width:41px;height:41px;box-sizing:border-box;border:1px solid #c2c2c2;border-radius:4px;background:#fff;"></div>
<div style="position:absolute;left:2709.5px;top:1298.5px;width:41px;height:41px;box-sizing:border-box;border:1px solid #c2c2c2;border-radius:4px;background:#fff;"></div>
<div style="position:absolute;left:2249px;top:1344px;width:691px;height:42px;box-sizing:border-box;background:#f0f0f0;"></div>
<svg style="position:absolute;left:2898.9px;top:1358.75px" width="19" height="12" viewBox="0 0 19 12"><path d="M2 2L9.5 9.5L17 2" fill="none" stroke="#4d4d4d" stroke-width="2"/></svg>
<svg style="position:absolute;left:2269.3px;top:1349px" width="32" height="32" viewBox="0 0 32 32"><path fill-rule="evenodd" fill="#262626" d="M5 0H27Q32 0 32 5V27Q32 32 27 32H5Q0 32 0 27V5Q0 0 5 0ZM16 3L22 9L16 15L10 9ZM3 9L6 5L9 9L6 13ZM23 9L26 5L29 9L26 13ZM16 17L22 23L16 29L10 23Z"/></svg>
<span class="t" style="left:2334.00px;top:247.20px;font-size:23.1px;color:#1c1c1c;letter-spacing:0.594px;font-weight:bold;">Qualità</span>
<span class="t" style="left:2264.60px;top:292.81px;font-size:19.3px;color:#1f1f1f;letter-spacing:0.506px;">Altezza dello strato</span>
<span class="t" style="left:2719.80px;top:292.81px;font-size:19.3px;color:#111;">0.2</span>
<span class="t" style="left:2894.90px;top:292.50px;font-size:20.2px;color:#9a9a9a;letter-spacing:1.484px;">mm</span>
<span class="t" style="left:2264.60px;top:338.81px;font-size:19.3px;color:#1f1f1f;letter-spacing:0.461px;">Altezza dello strato iniziale</span>
<span class="t" style="left:2719.80px;top:338.81px;font-size:19.3px;color:#111;">0.2</span>
<span class="t" style="left:2894.90px;top:338.50px;font-size:20.2px;color:#9a9a9a;letter-spacing:1.484px;">mm</span>
<span class="t" style="left:2263.60px;top:384.81px;font-size:19.3px;color:#1f1f1f;letter-spacing:0.390px;">Larghezza della linea</span>
<span class="t" style="left:2719.80px;top:384.81px;font-size:19.3px;color:#111;">0.4</span>
<span class="t" style="left:2894.90px;top:384.50px;font-size:20.2px;color:#9a9a9a;letter-spacing:1.484px;">mm</span>
<span class="t" style="left:2292.80px;top:430.81px;font-size:19.3px;color:#1f1f1f;letter-spacing:0.637px;">Larghezza delle linee perimetrali</span>
<span class="t" style="left:2719.80px;top:430.81px;font-size:19.3px;color:#111;">0.4</span>
<span class="t" style="left:2894.90px;top:430.50px;font-size:20.2px;color:#9a9a9a;letter-spacing:1.484px;">mm</span>
<span class="t" style="left:2322.00px;top:476.81px;font-size:19.3px;color:#1f1f1f;letter-spacing:0.385px;">Larghezza delle lin…ella parete esterna</span>
<span class="t" style="left:2719.80px;top:476.81px;font-size:19.3px;color:#111;">0.4</span>
<span class="t" style="left:2894.90px;top:476.50px;font-size:20.2px;color:#9a9a9a;letter-spacing:1.484px;">mm</span>
<span class="t" style="left:2322.00px;top:522.81px;font-size:19.3px;color:#1f1f1f;letter-spacing:0.455px;">Larghezza delle lin…ella parete interna</span>
<span class="t" style="left:2719.80px;top:522.81px;font-size:19.3px;color:#111;">0.4</span>
<span class="t" style="left:2894.90px;top:522.50px;font-size:20.2px;color:#9a9a9a;letter-spacing:1.484px;">mm</span>
<span class="t" style="left:2292.80px;top:568.81px;font-size:19.3px;color:#1f1f1f;letter-spacing:0.693px;">Larghezza delle linee superiore/inferiore</span>
<span class="t" style="left:2719.80px;top:568.81px;font-size:19.3px;color:#111;">0.4</span>
<span class="t" style="left:2894.90px;top:568.50px;font-size:20.2px;color:#9a9a9a;letter-spacing:1.484px;">mm</span>
<span class="t" style="left:2292.80px;top:614.81px;font-size:19.3px;color:#1f1f1f;letter-spacing:0.677px;">Larghezza delle linee di riempimento</span>
<span class="t" style="left:2719.80px;top:614.81px;font-size:19.3px;color:#111;">0.4</span>
<span class="t" style="left:2894.90px;top:614.50px;font-size:20.2px;color:#9a9a9a;letter-spacing:1.484px;">mm</span>
<span class="t" style="left:2263.60px;top:660.81px;font-size:19.3px;color:#1f1f1f;letter-spacing:0.514px;">Larghezza linea strato iniziale</span>
<span class="t" style="left:2718.80px;top:660.81px;font-size:19.3px;color:#111;">140.0</span>
<span class="t" style="left:2912.20px;top:660.81px;font-size:19.3px;color:#9a9a9a;">%</span>
<span class="t" style="left:2333.00px;top:707.20px;font-size:23.1px;color:#1c1c1c;letter-spacing:0.306px;font-weight:bold;">Pareti</span>
<span class="t" style="left:2264.60px;top:752.81px;font-size:19.3px;color:#1f1f1f;letter-spacing:0.472px;">Spessore delle pareti</span>
<span class="t" style="left:2718.80px;top:752.81px;font-size:19.3px;color:#111;">1.2</span>
<span class="t" style="left:2894.90px;top:752.50px;font-size:20.2px;color:#9a9a9a;letter-spacing:1.484px;">mm</span>
<span class="t" style="left:2292.80px;top:798.81px;font-size:19.3px;color:#1f1f1f;letter-spacing:0.833px;">Numero delle linee perimetrali</span>
<span class="t" style="left:2719.80px;top:798.81px;font-size:19.3px;color:#111;">3</span>
<span class="t" style="left:2264.60px;top:844.81px;font-size:19.3px;color:#1f1f1f;letter-spacing:0.598px;">Ottimizzazione sequenza di stampa pareti</span>
<span class="t" style="left:2263.60px;top:890.81px;font-size:19.3px;color:#1f1f1f;letter-spacing:0.757px;">Riempimento degli interstizi tra le pareti</span>
<span class="t" style="left:2718.80px;top:890.81px;font-size:19.3px;color:#111;letter-spacing:0.610px;">In tutti i possibili ...</span>
<span class="t" style="left:2263.60px;top:936.81px;font-size:19.3px;color:#1f1f1f;letter-spacing:0.527px;">Espansione orizzontale</span>
<span class="t" style="left:2719.80px;top:936.81px;font-size:19.3px;color:#111;">0.0</span>
<span class="t" style="left:2894.90px;top:936.50px;font-size:20.2px;color:#9a9a9a;letter-spacing:1.484px;">mm</span>
<span class="t" style="left:2334.00px;top:983.20px;font-size:23.1px;color:#1c1c1c;letter-spacing:0.495px;font-weight:bold;">Superiore / Inferiore</span>
<span class="t" style="left:2264.60px;top:1028.81px;font-size:19.3px;color:#1f1f1f;letter-spacing:0.696px;">Spessore dello strato superiore/inferiore</span>
<span class="t" style="left:2718.80px;top:1028.81px;font-size:19.3px;color:#111;">1.2</span>
<span class="t" style="left:2894.90px;top:1028.50px;font-size:20.2px;color:#9a9a9a;letter-spacing:1.484px;">mm</span>
<span class="t" style="left:2293.80px;top:1074.81px;font-size:19.3px;color:#1f1f1f;letter-spacing:0.552px;">Spessore dello strato superiore</span>
<span class="t" style="left:2718.80px;top:1074.81px;font-size:19.3px;color:#111;">1.2</span>
<span class="t" style="left:2894.90px;top:1074.50px;font-size:20.2px;color:#9a9a9a;letter-spacing:1.484px;">mm</span>
<span class="t" style="left:2323.00px;top:1120.81px;font-size:19.3px;color:#1f1f1f;letter-spacing:0.759px;">Strati superiori</span>
<span class="t" style="left:2719.80px;top:1120.81px;font-size:19.3px;color:#111;">6</span>
<span class="t" style="left:2293.80px;top:1166.81px;font-size:19.3px;color:#1f1f1f;letter-spacing:0.634px;">Spessore degli strati inferiori</span>
<span class="t" style="left:2718.80px;top:1166.81px;font-size:19.3px;color:#111;">1.2</span>
<span class="t" style="left:2894.90px;top:1166.50px;font-size:20.2px;color:#9a9a9a;letter-spacing:1.484px;">mm</span>
<span class="t" style="left:2323.00px;top:1212.81px;font-size:19.3px;color:#1f1f1f;letter-spacing:0.860px;">Strati inferiori</span>
<span class="t" style="left:2719.80px;top:1212.81px;font-size:19.3px;color:#111;">6</span>
<span class="t" style="left:2264.60px;top:1258.81px;font-size:19.3px;color:#1f1f1f;letter-spacing:0.929px;">Ordine superiore/inferiore monotonico</span>
<span class="t" style="left:2264.60px;top:1304.81px;font-size:19.3px;color:#1f1f1f;letter-spacing:0.688px;">Abilita stiratura</span>
<span class="t" style="left:2333.00px;top:1351.20px;font-size:23.1px;color:#1c1c1c;letter-spacing:0.183px;font-weight:bold;">Riempimento</span>
</div></div>
<div style="position:absolute;left:2207px;top:1362px;width:794px;height:2px;box-sizing:border-box;background:#b4b4b4;"></div>
<div style="position:absolute;left:2207px;top:1456.5px;width:794px;height:1px;box-sizing:border-box;background:#c4c4c4;"></div>
<div style="position:absolute;left:2207px;top:1457.5px;width:794px;height:9.5px;box-sizing:border-box;background:#f0f0f0;border-radius:0 0 2px 2px;"></div>
<div style="position:absolute;left:2595.5px;top:1461px;width:3.5px;height:1.2px;box-sizing:border-box;background:#8a8a8a;"></div>
<div style="position:absolute;left:2602.5px;top:1461px;width:3.5px;height:1.2px;box-sizing:border-box;background:#8a8a8a;"></div>
<div style="position:absolute;left:2609.5px;top:1461px;width:3.5px;height:1.2px;box-sizing:border-box;background:#8a8a8a;"></div>
<div style="position:absolute;left:2228px;top:1385.3px;width:193px;height:51.5px;box-sizing:border-box;border:2px solid #2a5db0;background:#fff;"></div>
<svg style="position:absolute;left:2250px;top:1399px" width="16" height="22" viewBox="0 0 16 22"><path d="M12 4L5.5 11L12 18" fill="none" stroke="#2a5db0" stroke-width="2"/></svg>
<div style="position:absolute;left:2505.7px;top:1705.8px;width:560px;height:140px;box-sizing:border-box;border:2px solid #c0c0c0;border-radius:4px;background:#fff;"></div>
<div style="position:absolute;left:2541.2px;top:1735.2px;width:473.8px;height:51.4px;box-sizing:border-box;background:#196ef0;"></div>
<span class="t" style="left:2224.90px;top:32.31px;font-size:24.8px;color:#666;letter-spacing:-0.000px;">Impostazioni di stampa</span>
<span class="t" style="left:2226.80px;top:109.11px;font-size:24.8px;color:#0c0c0c;letter-spacing:0.551px;">Profilo</span>
<span class="t" style="left:2413.00px;top:108.61px;font-size:19.3px;color:#111;letter-spacing:1.289px;">Normal</span>
<span class="t" style="left:2487.00px;top:108.61px;font-size:19.3px;color:#d2d2d2;letter-spacing:0.393px;">- 0.2mm</span>
<span class="t" style="left:2325.50px;top:179.07px;font-size:20.3px;color:#8c8c8c;letter-spacing:0.312px;font-style:italic;">Impostazioni ricerca</span>
<span class="t" style="left:2279.60px;top:1397.51px;font-size:24.8px;color:#2a5db0;letter-spacing:-0.359px;">Consigliata</span>
<span class="t" style="left:2699.40px;top:1747.31px;font-size:24.8px;color:#fff;letter-spacing:-0.222px;">Sezionamento</span>
<span class="t" style="left:2431.00px;top:1674.47px;font-size:35px;color:rgba(125,125,125,0.46);letter-spacing:0.097px;">Attiva Windows</span>
<span class="t" style="left:2430.00px;top:1716.06px;font-size:23.2px;color:rgba(125,125,125,0.46);letter-spacing:0.975px;">Passa a Impostazioni per attivare Windows.</span>
</body></html>
